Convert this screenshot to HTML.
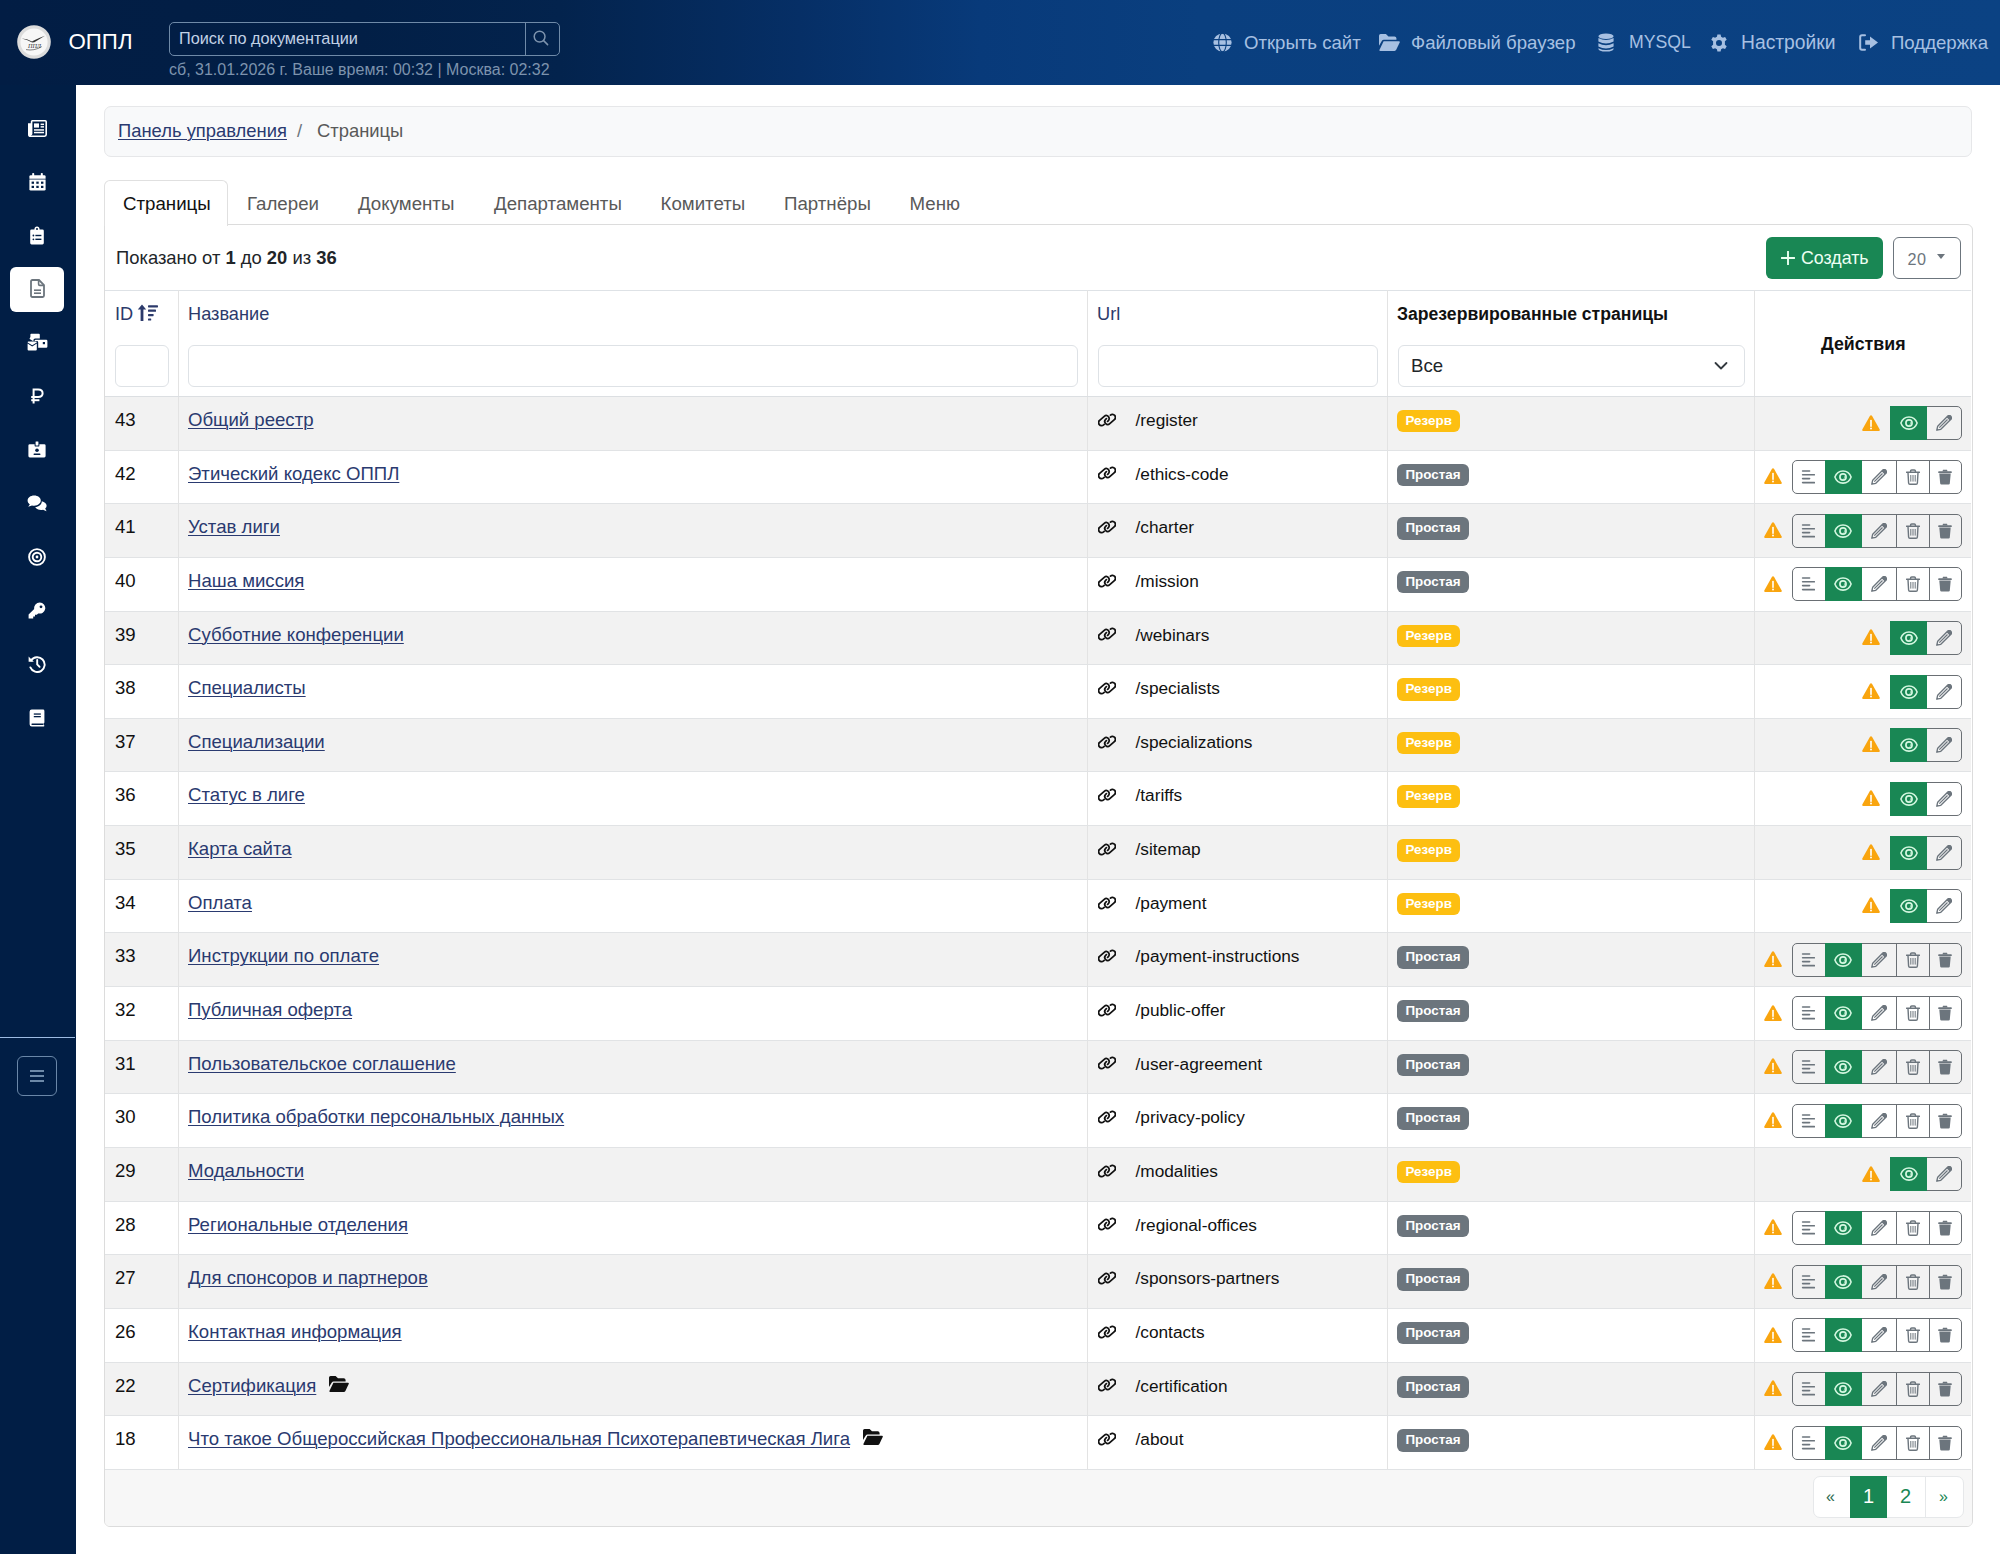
<!DOCTYPE html>
<html lang="ru"><head><meta charset="utf-8"><title>Страницы</title>
<style>
*{box-sizing:border-box;margin:0;padding:0}
html,body{width:2000px;height:1554px;overflow:hidden;background:#fff;font-family:"Liberation Sans",sans-serif;color:#212529}
.abs{position:absolute}
#hdr{position:absolute;left:0;top:0;width:2000px;height:85px;background:linear-gradient(90deg,#021d44 0%,#021f46 18%,#03234d 28%,#062f66 40%,#083a7a 49%,#0a3f7f 60%,#0b4283 100%)}
#side{position:absolute;left:0;top:85px;width:76px;height:1469px;background:#011e45}
.sico{position:absolute;left:0;width:74px;height:20px;display:flex;align-items:center;justify-content:center}
.sact{position:absolute;left:10px;width:54px;height:45px;background:#fff;border-radius:6px}
.navi{position:absolute;top:0;height:85px;display:flex;align-items:center;color:#a7c0e2;font-size:18.6px;white-space:nowrap}
.navi svg{display:block}
.tx{white-space:nowrap}
#bc{position:absolute;left:104px;top:105.5px;width:1868px;height:51px;background:#f8f9fa;border:1px solid #e6e7e9;border-radius:7px}
.tab{position:absolute;top:181px;height:45px;font-size:18.7px;color:#595959;white-space:nowrap;line-height:45px}
#card{position:absolute;left:104px;top:224px;width:1868.5px;height:1303px;border:1px solid #dcdcdc;border-radius:0 6px 6px 6px;background:#fff;overflow:hidden}
.tr{position:absolute;left:105px;width:1866px;height:53.67px;border-bottom:1px solid #e1e3e5;background:#fff}
.tr.st{background:#f2f2f2}
.tr>div{position:absolute;top:0;height:100%;border-right:1px solid #e3e3e3}
.c1{left:0;width:74px}
.c2{left:74px;width:909px}
.c3{left:983px;width:300px}
.c4{left:1283px;width:367px}
.c5{left:1650px;width:216px;border-right:none!important}
.c1 .tx,.c2 .tx{position:absolute;left:10px;top:12px;font-size:18.6px;line-height:22px;color:#111}
.c2 .tx{left:9px}
.lnk{color:#2a3a70;text-decoration:underline;text-underline-offset:2px;text-decoration-thickness:1.2px}
.fold{display:inline-block;margin-left:13px;vertical-align:0px}
.fold svg{display:block}
.ilink{position:absolute;left:9.8px;top:15.8px}
.url{position:absolute;left:47.5px;top:12px;font-size:17.25px;line-height:22px;color:#111}
.badge{position:absolute;left:9px;top:13px;height:22.4px;line-height:22.4px;padding:0 8.5px;border-radius:6px;color:#fff;font-weight:700;font-size:13.4px}
.rz{background:#fdbf11}
.pr{background:#6c757d}
.c5in{position:absolute;right:9.4px;top:9.4px;height:34px;display:flex;align-items:center}
.iwarn{display:block;margin-right:10.4px;margin-top:-1.5px}
.agrp{position:relative;height:34px;display:block}
.agbg{position:absolute;left:0;top:0;height:34px;border:1.2px solid #6a6f74;border-radius:5px}
.ab{position:absolute;top:0;height:34px;display:flex;align-items:center;justify-content:center}
.ab.g{background:#198754}
.ic{display:block;line-height:0}
.asep{position:absolute;top:0;width:1.2px;height:34px;background:#6a6f74}
.inp{position:absolute;top:345px;height:41.5px;border:1px solid #dee2e6;border-radius:6px;background:#fff}
.th{position:absolute;font-size:18.2px;line-height:22px;color:#2c3a6b;white-space:nowrap}
</style></head><body>
<div id="hdr">
  <div class="abs" style="left:16.5px;top:25px"><svg width="34" height="34" viewBox="0 0 34 34"><circle cx="17" cy="17" r="16.8" fill="#dcdcdc"/><circle cx="17" cy="17" r="13.6" fill="#f7f7f7"/><path d="M4.6 13.6 Q10 13.6 15 16.4 L16.8 15.4 Q22.6 12.8 28 10.8 Q22.4 14.2 17.4 17.2 L15.2 17.6 Q10 14.6 4.6 13.6Z" fill="#333"/><text x="17.5" y="23" font-family="Liberation Serif" font-style="italic" font-size="6.2" text-anchor="middle" fill="#333">ППЛ</text><path d="M9 24.6 Q17 26.2 24.8 21.6" fill="none" stroke="#333" stroke-width=".6"/></svg></div>
  <div class="abs tx" style="left:68.5px;top:29px;font-size:22.3px;line-height:26px;color:#fff">ОППЛ</div>
  <div class="abs" style="left:169px;top:22px;width:391px;height:34px;border:1.5px solid #6f8aa8;border-radius:5px"></div>
  <div class="abs" style="left:524.5px;top:22px;width:1.5px;height:34px;background:#6f8aa8"></div>
  <div class="abs tx" style="left:179px;top:28px;font-size:16.3px;line-height:20px;color:#c2d2e6">Поиск по документации</div>
  <div class="abs" style="left:533px;top:29.5px"><svg width="16" height="16" viewBox="0 0 16 16"><g fill="none" stroke="#7d93ad" stroke-width="1.5" stroke-linecap="round"><circle cx="6.6" cy="6.6" r="5.4"/><path d="M10.6 10.6 L14.6 14.6"/></g></svg></div>
  <div class="abs tx" style="left:169px;top:60px;font-size:16px;line-height:20px;color:#7d93ad">сб, 31.01.2026 г. Ваше время: 00:32 | Москва: 02:32</div>
  <div class="navi" style="left:1213px"><svg width="19" height="19" viewBox="0 0 19 19"><circle cx="9.5" cy="9.5" r="9.1" fill="#a7c0e2"/><g fill="none" stroke="#0a3f7f" stroke-width="1.1"><ellipse cx="9.5" cy="9.5" rx="3.8" ry="9.4"/><path d="M0 6.6 H19 M0 12.4 H19"/></g></svg><span style="margin-left:12px">Открыть сайт</span></div>
  <div class="navi" style="left:1379px"><svg width="21" height="17" viewBox="0 0 20 16"><path d="M0 1.6 Q0 0 1.6 0 H6.6 L9 2.2 H14.8 Q16.4 2.2 16.6 4 V5.4 H4.6 Q3.4 5.4 2.8 6.4 L0 11Z" fill="#a7c0e2"/><path d="M4.4 6.8 H19 Q20.2 6.9 19.7 8 L16.4 15 Q15.9 16 14.8 16 H1.2 Q0 15.9 0.5 14.8Z" fill="#a7c0e2"/></svg><span style="margin-left:11px">Файловый браузер</span></div>
  <div class="navi" style="left:1598px"><svg width="16" height="19" viewBox="0 0 16 19"><g fill="#a7c0e2"><ellipse cx="8" cy="3.2" rx="7.6" ry="2.8"/><path d="M0.4 5 Q8 9 15.6 5 V8.4 Q8 12.4 0.4 8.4Z"/><path d="M0.4 10.2 Q8 14.2 15.6 10.2 V13.6 Q8 17.6 0.4 13.6Z"/><path d="M0.4 15.2 Q8 19 15.6 15.2 V15.8 Q15.6 18.6 8 18.6 Q0.4 18.6 0.4 15.8Z"/></g></svg><span style="margin-left:15px;font-size:17.7px">MYSQL</span></div>
  <div class="navi" style="left:1710px"><svg width="18" height="18" viewBox="0 0 18 18"><path fill="#a7c0e2" fill-rule="evenodd" d="M7.4 0.4 H10.6 L11.1 2.7 L12.9 3.7 L15.1 2.9 L16.7 5.7 L14.9 7.3 V9.1 V10.7 L16.7 12.3 L15.1 15.1 L12.9 14.3 L11.1 15.3 L10.6 17.6 H7.4 L6.9 15.3 L5.1 14.3 L2.9 15.1 L1.3 12.3 L3.1 10.7 V7.3 L1.3 5.7 L2.9 2.9 L5.1 3.7 L6.9 2.7Z M9 6 A3 3 0 1 0 9 12 A3 3 0 1 0 9 6Z"/></svg><span style="margin-left:13px;font-size:19.3px">Настройки</span></div>
  <div class="navi" style="left:1859px"><svg width="20" height="17" viewBox="0 0 20 17"><path d="M6 1.2 H3 Q1.2 1.2 1.2 3 V14 Q1.2 15.8 3 15.8 H6" fill="none" stroke="#a7c0e2" stroke-width="2" stroke-linecap="round"/><path d="M6.2 6.2 H11 V2.6 L19 8.5 L11 14.4 V10.8 H6.2Z" fill="#a7c0e2"/></svg><span style="margin-left:12px">Поддержка</span></div>
</div>
<div id="side">
  <div style="position:absolute;left:0;top:-85px"><div class="sico" style="top:118.0px"><svg width="19" height="17" viewBox="0 0 19 17"><path d="M3.6 1.5 Q3.6 0.8 4.3 0.8 H17.2 Q18.2 0.8 18.2 1.8 V14.6 Q18.2 16.2 16.6 16.2 H2.6 Q0.8 16.2 0.8 14.4 V4 H2.4 V14.2 Q2.4 14.8 3 14.6 Q3.6 14.4 3.6 13.8Z" fill="none" stroke="#fff" stroke-width="1.6"/><rect x="6" y="3.4" width="5" height="4.2" fill="#fff"/><rect x="12.6" y="3.6" width="3.4" height="1.5" fill="#fff"/><rect x="12.6" y="6.1" width="3.4" height="1.5" fill="#fff"/><rect x="6" y="9.2" width="10" height="1.5" fill="#fff"/><rect x="6" y="11.8" width="10" height="1.5" fill="#fff"/></svg></div><div class="sico" style="top:171.6px"><svg width="17" height="18" viewBox="0 0 17 18"><rect x="3.2" y="0" width="2" height="3.6" rx=".8" fill="#fff"/><rect x="11.8" y="0" width="2" height="3.6" rx=".8" fill="#fff"/><path d="M0.4 3.6 Q0.4 2.2 1.8 2.2 H15.2 Q16.6 2.2 16.6 3.6 V5.8 H0.4Z" fill="#fff"/><path d="M0.4 6.6 H16.6 V16.2 Q16.6 17.6 15.2 17.6 H1.8 Q0.4 17.6 0.4 16.2Z" fill="#fff"/><g fill="#021e45"><rect x="2.6" y="8.6" width="2.4" height="2.2"/><rect x="7.3" y="8.6" width="2.4" height="2.2"/><rect x="12" y="8.6" width="2.4" height="2.2"/><rect x="2.6" y="12.8" width="2.4" height="2.2"/><rect x="7.3" y="12.8" width="2.4" height="2.2"/><rect x="12" y="12.8" width="2.4" height="2.2"/></g></svg></div><div class="sico" style="top:225.2px"><svg width="14" height="19" viewBox="0 0 14 19"><path d="M1.6 3.4 H4.4 Q4.6 0.6 7 0.6 Q9.4 0.6 9.6 3.4 H12.4 Q13.8 3.4 13.8 4.8 V17 Q13.8 18.4 12.4 18.4 H1.6 Q0.2 18.4 0.2 17 V4.8 Q0.2 3.4 1.6 3.4Z" fill="#fff"/><circle cx="7" cy="3" r="1" fill="#021e45"/><g fill="#021e45"><circle cx="3.4" cy="9.5" r=".9"/><circle cx="3.4" cy="13.3" r=".9"/><rect x="5.4" y="8.8" width="6" height="1.4"/><rect x="5.4" y="12.6" width="6" height="1.4"/></g></svg></div><div class="sact" style="top:267px"></div><div class="sico" style="top:278.8px"><svg width="15" height="19" viewBox="0 0 15 19"><path d="M1 2.4 Q1 1 2.4 1 H9 L14 6 V16.6 Q14 18 12.6 18 H2.4 Q1 18 1 16.6Z" fill="none" stroke="#6c757d" stroke-width="1.8"/><path d="M8.6 1.2 V5.2 Q8.6 6.4 9.8 6.4 H13.8" fill="none" stroke="#6c757d" stroke-width="1.6"/><rect x="4" y="10.4" width="7" height="1.6" fill="#6c757d"/><rect x="4" y="13.4" width="7" height="1.6" fill="#6c757d"/></svg></div><div class="sico" style="top:332.4px"><svg width="21" height="18" viewBox="0 0 21 18"><path d="M3.4 4 V1.6 Q3.4 0.8 4.2 0.8 H11.8 Q12.8 0.8 12.8 1.8 V5.4 H8.2 Q6.4 5.4 6.4 7.2 V8.2 L2.6 6 V5.4" fill="#fff"/><path d="M7.6 8 Q7.6 6.8 8.8 6.8 H19.2 Q20.4 6.8 20.4 8 V13.6 Q20.4 14.8 19.2 14.8 H11.2 V9.4 Q11.2 8 9.8 8Z" fill="#fff"/><rect x="15.8" y="9" width="2.2" height="2.2" fill="#021e45"/><path d="M0.6 10.4 L5.2 13.4 L9.8 10.4 V16.4 Q9.8 17.4 8.8 17.4 H1.6 Q0.6 17.4 0.6 16.4Z" fill="#fff"/><path d="M0.6 9.4 Q0.6 8.6 1.4 8.6 H9 Q9.8 8.6 9.8 9.4 L5.2 12.2Z" fill="#fff"/></svg></div><div class="sico" style="top:386.0px"><svg width="14" height="16" viewBox="0 0 14 16"><g fill="none" stroke="#fff" stroke-width="2"><path d="M3.6 15.6 V1.6 H8.2 Q12.6 1.6 12.6 5.3 Q12.6 9 8.2 9 H1.2"/><path d="M1.2 12.2 H9.4"/></g></svg></div><div class="sico" style="top:439.6px"><svg width="18" height="17" viewBox="0 0 18 17"><path d="M1.8 3.2 H6.6 V4.4 Q6.6 5.6 7.8 5.6 H10.2 Q11.4 5.6 11.4 4.4 V3.2 H16.2 Q17.6 3.2 17.6 4.6 V15 Q17.6 16.4 16.2 16.4 H1.8 Q0.4 16.4 0.4 15 V4.6 Q0.4 3.2 1.8 3.2Z" fill="#fff"/><rect x="7.6" y="0.4" width="2.8" height="4.2" rx=".4" fill="#fff"/><circle cx="9" cy="9.2" r="1.8" fill="#021e45"/><rect x="5.6" y="12.4" width="6.8" height="1.6" rx=".6" fill="#021e45"/></svg></div><div class="sico" style="top:493.2px"><svg width="20" height="17" viewBox="0 0 20 17"><path d="M7.2 0.6 C3.4 0.6 0.6 2.8 0.6 5.6 C0.6 7.2 1.5 8.5 2.8 9.4 L1.2 11.8 L5 10.4 C5.7 10.6 6.4 10.7 7.2 10.7 C11 10.7 13.8 8.4 13.8 5.6 C13.8 2.8 11 0.6 7.2 0.6Z" fill="#fff"/><path d="M14.8 6.2 C14.8 9.6 11.8 11.8 8.2 12 C9.2 13.8 11.4 15 14 15 C14.7 15 15.4 14.9 16 14.7 L19.6 16.2 L18.2 13.6 C19.2 12.8 19.6 11.8 19.6 10.6 C19.6 8.6 17.6 6.8 14.8 6.2Z" fill="#fff"/></svg></div><div class="sico" style="top:546.8px"><svg width="18" height="18" viewBox="0 0 18 18"><g fill="none" stroke="#fff" stroke-width="1.9"><circle cx="9" cy="9" r="7.9"/><circle cx="9" cy="9" r="4.3"/></g><circle cx="9" cy="9" r="1.4" fill="#fff"/></svg></div><div class="sico" style="top:600.4px"><svg width="18" height="17" viewBox="0 0 18 17"><path d="M11.8 0.4 A5.6 5.6 0 1 1 10.2 11.4 L8.8 12.8 H7 V14.6 H5.2 V16.4 H0.6 V12.6 L6.2 7 A5.6 5.6 0 0 1 11.8 0.4Z" fill="#fff"/><circle cx="13" cy="4.8" r="1.4" fill="#021e45"/></svg></div><div class="sico" style="top:654.0px"><svg width="18" height="18" viewBox="0 0 18 18"><g fill="none" stroke="#fff" stroke-width="1.9" stroke-linecap="round"><path d="M3.2 5.4 A7.4 7.4 0 1 1 2.4 12.4"/><path d="M9.2 5 V9.4 L11.6 11.8"/></g><path d="M0.6 1.6 V6.8 H5.8Z" fill="#fff"/></svg></div><div class="sico" style="top:707.6px"><svg width="16" height="18" viewBox="0 0 16 18"><path d="M2.8 0.6 H14 Q15.4 0.6 15.4 2 V13.2 Q15.4 14 14.6 14.2 V16 Q15.4 16.2 15.4 16.8 Q15.4 17.4 14.6 17.4 H2.8 Q0.6 17.4 0.6 15.2 V2.8 Q0.6 0.6 2.8 0.6Z" fill="#fff"/><rect x="2.4" y="14.6" width="12" height="1.4" rx=".7" fill="#021e45"/><rect x="4.8" y="4.4" width="7" height="1.3" fill="#021e45"/><rect x="4.8" y="7" width="7" height="1.3" fill="#021e45"/></svg></div></div>
  <div class="abs" style="left:0;top:951.6px;width:75px;height:1.6px;background:#9dbbe2"></div>
  <div class="abs" style="left:17px;top:971px;width:40px;height:40px;border:1.2px solid #6a87a8;border-radius:6px"></div>
  <div class="abs" style="left:30px;top:985px;width:14px;height:1.6px;background:#6d89a8"></div>
  <div class="abs" style="left:30px;top:990px;width:14px;height:1.6px;background:#6d89a8"></div>
  <div class="abs" style="left:30px;top:995px;width:14px;height:1.6px;background:#6d89a8"></div>
</div>

<div id="bc"></div>
<div class="abs tx" style="left:118px;top:120px;font-size:18.4px;line-height:22px;color:#2a3a70;text-decoration:underline;text-underline-offset:2px;text-decoration-thickness:1.2px">Панель управления</div>
<div class="abs tx" style="left:297px;top:120px;font-size:18.4px;line-height:22px;color:#6c757d">/</div>
<div class="abs tx" style="left:317px;top:120px;font-size:18.4px;line-height:22px;color:#595959">Страницы</div>

<div id="card">
  <div class="abs" style="left:0;top:1245px;width:1867px;height:58px;background:#f7f7f7"></div>
</div>
<div class="abs" style="left:104px;top:180px;width:124px;height:46px;background:#fff;border:1px solid #e0e0e0;border-bottom:none;border-radius:6px 6px 0 0"></div>
<div class="tab" style="left:123px;color:#111">Страницы</div>
<div class="tab" style="left:247px">Галереи</div>
<div class="tab" style="left:358px">Документы</div>
<div class="tab" style="left:494px">Департаменты</div>
<div class="tab" style="left:660.5px">Комитеты</div>
<div class="tab" style="left:784px">Партнёры</div>
<div class="tab" style="left:909.5px">Меню</div>

<div class="abs tx" style="left:116px;top:247px;font-size:18.4px;line-height:22px;color:#212529">Показано от <b style="font-weight:700">1</b> до <b>20</b> из <b>36</b></div>
<div class="abs" style="left:1766px;top:237px;width:117px;height:42px;background:#198754;border-radius:6px"></div>
<div class="abs" style="left:1781px;top:250.5px"><svg width="14" height="14" viewBox="0 0 14 14"><path d="M7 0.5 V13.5 M0.5 7 H13.5" stroke="#e9fff0" stroke-width="1.9" stroke-linecap="round"/></svg></div>
<div class="abs tx" style="left:1801px;top:247px;font-size:17.8px;line-height:22px;color:#eefff3">Создать</div>
<div class="abs" style="left:1892.5px;top:237px;width:68px;height:42px;border:1px solid #6c757d;border-radius:6px"></div>
<div class="abs tx" style="left:1907.5px;top:249px;font-size:16.2px;line-height:20px;color:#6c757d;letter-spacing:.6px">20</div>
<div class="abs" style="left:1937px;top:254px;width:0;height:0;border-left:4.5px solid transparent;border-right:4.5px solid transparent;border-top:5px solid #6c757d"></div>

<!-- table head -->
<div class="abs" style="left:105px;top:290px;width:1866px;height:1px;background:#dee2e6"></div>
<div class="abs" style="left:178px;top:290px;width:1px;height:107px;background:#e3e3e3"></div>
<div class="abs" style="left:1087px;top:290px;width:1px;height:107px;background:#e3e3e3"></div>
<div class="abs" style="left:1387px;top:290px;width:1px;height:107px;background:#e3e3e3"></div>
<div class="abs" style="left:1754px;top:290px;width:1px;height:107px;background:#e3e3e3"></div>
<div class="abs" style="left:105px;top:396px;width:1866px;height:1px;background:#dcdfe2"></div>
<div class="th" style="left:115px;top:303px">ID</div>
<div class="abs" style="left:137px;top:304px"><svg width="22" height="18" viewBox="0 0 22 18"><g fill="#2c3a6b"><path d="M5 0.6 L9.2 5.4 H6.4 V17 H3.6 V5.4 H0.8Z"/><rect x="11" y="1.2" width="10" height="2.2" rx=".6"/><rect x="11" y="5.6" width="8" height="2.2" rx=".6"/><rect x="11" y="10" width="5.6" height="2.2" rx=".6"/><rect x="11" y="14.4" width="3.2" height="2.2" rx=".6"/></g></svg></div>
<div class="th" style="left:188px;top:303px">Название</div>
<div class="th" style="left:1097px;top:303px">Url</div>
<div class="th" style="left:1397px;top:303px;font-weight:700;color:#111;font-size:17.6px">Зарезервированные страницы</div>
<div class="th" style="left:1821px;top:333px;font-weight:700;color:#111;font-size:17.8px">Действия</div>
<div class="inp" style="left:115px;width:53.5px"></div>
<div class="inp" style="left:188px;width:890px"></div>
<div class="inp" style="left:1097.5px;width:280.5px"></div>
<div class="inp" style="left:1397.5px;width:347px"></div>
<div class="abs tx" style="left:1411px;top:355px;font-size:18.6px;line-height:22px;color:#212529">Все</div>
<div class="abs" style="left:1714px;top:357px"><svg width="14" height="10" viewBox="0 0 14 10"><path d="M1.5 2 L7 7.5 L12.5 2" fill="none" stroke="#343a40" stroke-width="1.8" stroke-linecap="round" stroke-linejoin="round"/></svg></div>

<div class="tr st" style="top:397.00px">
<div class="c1"><span class="tx">43</span></div>
<div class="c2"><span class="tx"><a class="lnk">Общий реестр</a></span></div>
<div class="c3"><svg class="ilink" width="18" height="14" viewBox="0 0 18 14"><g fill="none" stroke="#111" stroke-width="1.75" stroke-linecap="round"><path d="M6.17 11.35 L5.57 11.87 A3 3 0 0 1 1.63 7.33 L6.23 3.33 A3 3 0 0 1 10.17 7.87 L9.6 8.4"/><path d="M12.43 2.13 A3 3 0 0 1 16.37 6.67 L11.77 10.67 A3 3 0 0 1 7.83 6.13 L8.43 5.6"/></g></svg><span class="tx url">/register</span></div>
<div class="c4"><span class="badge rz">Резерв</span></div>
<div class="c5"><span class="c5in"><svg class="iwarn" width="18" height="16" viewBox="0 0 18 16"><path d="M9 0.3 Q9.7 0.3 10.1 1 L17.7 14.4 Q18.1 15.8 16.8 15.9 L1.2 15.9 Q-0.1 15.8 0.3 14.4 L7.9 1 Q8.3 0.3 9 0.3Z" fill="#f9a50f"/><rect x="8.2" y="4.8" width="1.6" height="7.2" rx=".7" fill="#fff"/><circle cx="9" cy="13.5" r="0.95" fill="#fff"/></svg><span class="agrp" style="width:71.6px"><span class="agbg" style="width:71.6px"></span><span class="ab g" style="left:0px;width:37.0px"><span class="ic"><svg width="18" height="14" viewBox="0 0 18 14"><path d="M9 0.9 C5 0.9 2 3.7 0.9 7 C2 10.3 5 13.1 9 13.1 C13 13.1 16 10.3 17.1 7 C16 3.7 13 0.9 9 0.9Z" fill="none" stroke="#d4f7e0" stroke-width="1.55"/><circle cx="9" cy="7" r="3.1" fill="none" stroke="#d4f7e0" stroke-width="1.65"/><path d="M9.9 8.6 A1.8 1.8 0 0 0 10.6 6.4" fill="none" stroke="#d4f7e0" stroke-width="0.9"/></svg></span></span><span class="ab w ll" style="left:37.0px;width:34.599999999999994px"><span class="ic"><svg width="16" height="16" viewBox="0 0 16 16"><path d="M0.8 15.2 L1.7 11.2 L11.8 1.1 Q13.2 -0.3 14.6 1.1 L14.9 1.4 Q16.3 2.8 14.9 4.2 L4.8 14.3 Z" fill="none" stroke="#6c757d" stroke-width="1.35" stroke-linejoin="round"/><path d="M10.6 2.3 L11.8 1.1 Q13.2 -0.3 14.6 1.1 L14.9 1.4 Q16.3 2.8 14.9 4.2 L13.7 5.4Z" fill="#6c757d"/><path d="M3.3 12.7 L11.5 4.5" stroke="#6c757d" stroke-width="1.2"/><path d="M0.8 15.2 L1.2 13.4 L2.6 14.8Z" fill="#6c757d"/></svg></span></span></span></span></div>
</div>
<div class="tr" style="top:450.64px">
<div class="c1"><span class="tx">42</span></div>
<div class="c2"><span class="tx"><a class="lnk">Этический кодекс ОППЛ</a></span></div>
<div class="c3"><svg class="ilink" width="18" height="14" viewBox="0 0 18 14"><g fill="none" stroke="#111" stroke-width="1.75" stroke-linecap="round"><path d="M6.17 11.35 L5.57 11.87 A3 3 0 0 1 1.63 7.33 L6.23 3.33 A3 3 0 0 1 10.17 7.87 L9.6 8.4"/><path d="M12.43 2.13 A3 3 0 0 1 16.37 6.67 L11.77 10.67 A3 3 0 0 1 7.83 6.13 L8.43 5.6"/></g></svg><span class="tx url">/ethics-code</span></div>
<div class="c4"><span class="badge pr">Простая</span></div>
<div class="c5"><span class="c5in"><svg class="iwarn" width="18" height="16" viewBox="0 0 18 16"><path d="M9 0.3 Q9.7 0.3 10.1 1 L17.7 14.4 Q18.1 15.8 16.8 15.9 L1.2 15.9 Q-0.1 15.8 0.3 14.4 L7.9 1 Q8.3 0.3 9 0.3Z" fill="#f9a50f"/><rect x="8.2" y="4.8" width="1.6" height="7.2" rx=".7" fill="#fff"/><circle cx="9" cy="13.5" r="0.95" fill="#fff"/></svg><span class="agrp" style="width:169.6px"><span class="agbg" style="width:169.6px"></span><span class="ab w fl" style="left:0px;width:32.7px"><span class="ic"><svg width="14" height="14" viewBox="0 0 14 14"><g stroke="#6c757d" stroke-width="1.55" stroke-linecap="round"><path d="M1.6 0.9 H8.6"/><path d="M1.6 4.8 H13.4"/><path d="M1.6 8.6 H8.6"/><path d="M1.6 12.6 H13.4"/></g></svg></span></span><span class="ab g" style="left:32.7px;width:37.099999999999994px"><span class="ic"><svg width="18" height="14" viewBox="0 0 18 14"><path d="M9 0.9 C5 0.9 2 3.7 0.9 7 C2 10.3 5 13.1 9 13.1 C13 13.1 16 10.3 17.1 7 C16 3.7 13 0.9 9 0.9Z" fill="none" stroke="#d4f7e0" stroke-width="1.55"/><circle cx="9" cy="7" r="3.1" fill="none" stroke="#d4f7e0" stroke-width="1.65"/><path d="M9.9 8.6 A1.8 1.8 0 0 0 10.6 6.4" fill="none" stroke="#d4f7e0" stroke-width="0.9"/></svg></span></span><span class="ab w" style="left:69.8px;width:34.60000000000001px"><span class="ic"><svg width="16" height="16" viewBox="0 0 16 16"><path d="M0.8 15.2 L1.7 11.2 L11.8 1.1 Q13.2 -0.3 14.6 1.1 L14.9 1.4 Q16.3 2.8 14.9 4.2 L4.8 14.3 Z" fill="none" stroke="#6c757d" stroke-width="1.35" stroke-linejoin="round"/><path d="M10.6 2.3 L11.8 1.1 Q13.2 -0.3 14.6 1.1 L14.9 1.4 Q16.3 2.8 14.9 4.2 L13.7 5.4Z" fill="#6c757d"/><path d="M3.3 12.7 L11.5 4.5" stroke="#6c757d" stroke-width="1.2"/><path d="M0.8 15.2 L1.2 13.4 L2.6 14.8Z" fill="#6c757d"/></svg></span></span><span class="ab w" style="left:104.4px;width:32.599999999999994px"><span class="ic"><svg width="14" height="16" viewBox="0 0 14 16"><g fill="none" stroke="#6c757d"><path d="M0.6 3.2 H13.4" stroke-width="1.5" stroke-linecap="round"/><path d="M4.6 3 V2.1 Q4.6 1 5.7 1 H8.3 Q9.4 1 9.4 2.1 V3" stroke-width="1.4"/><path d="M2 3.6 L2.6 14 Q2.7 15.2 3.9 15.2 H10.1 Q11.3 15.2 11.4 14 L12 3.6" stroke-width="1.4"/><path d="M4.8 6 V12.6 M7 6 V12.6 M9.2 6 V12.6" stroke-width="1"/></g></svg></span></span><span class="ab w ll" style="left:137.0px;width:32.599999999999994px"><span class="ic"><svg width="14" height="16" viewBox="0 0 14 16"><g fill="#6c757d"><rect x="0.2" y="2.2" width="13.6" height="1.9" rx=".7"/><path d="M4.4 2.4 L5 0.7 H9 L9.6 2.4Z"/><path d="M1.3 4.6 H12.7 L11.8 14.4 Q11.7 15.4 10.6 15.4 H3.4 Q2.3 15.4 2.2 14.4Z"/></g></svg></span></span><span class="asep" style="left:103.9px"></span><span class="asep" style="left:136.5px"></span></span></span></div>
</div>
<div class="tr st" style="top:504.28px">
<div class="c1"><span class="tx">41</span></div>
<div class="c2"><span class="tx"><a class="lnk">Устав лиги</a></span></div>
<div class="c3"><svg class="ilink" width="18" height="14" viewBox="0 0 18 14"><g fill="none" stroke="#111" stroke-width="1.75" stroke-linecap="round"><path d="M6.17 11.35 L5.57 11.87 A3 3 0 0 1 1.63 7.33 L6.23 3.33 A3 3 0 0 1 10.17 7.87 L9.6 8.4"/><path d="M12.43 2.13 A3 3 0 0 1 16.37 6.67 L11.77 10.67 A3 3 0 0 1 7.83 6.13 L8.43 5.6"/></g></svg><span class="tx url">/charter</span></div>
<div class="c4"><span class="badge pr">Простая</span></div>
<div class="c5"><span class="c5in"><svg class="iwarn" width="18" height="16" viewBox="0 0 18 16"><path d="M9 0.3 Q9.7 0.3 10.1 1 L17.7 14.4 Q18.1 15.8 16.8 15.9 L1.2 15.9 Q-0.1 15.8 0.3 14.4 L7.9 1 Q8.3 0.3 9 0.3Z" fill="#f9a50f"/><rect x="8.2" y="4.8" width="1.6" height="7.2" rx=".7" fill="#fff"/><circle cx="9" cy="13.5" r="0.95" fill="#fff"/></svg><span class="agrp" style="width:169.6px"><span class="agbg" style="width:169.6px"></span><span class="ab w fl" style="left:0px;width:32.7px"><span class="ic"><svg width="14" height="14" viewBox="0 0 14 14"><g stroke="#6c757d" stroke-width="1.55" stroke-linecap="round"><path d="M1.6 0.9 H8.6"/><path d="M1.6 4.8 H13.4"/><path d="M1.6 8.6 H8.6"/><path d="M1.6 12.6 H13.4"/></g></svg></span></span><span class="ab g" style="left:32.7px;width:37.099999999999994px"><span class="ic"><svg width="18" height="14" viewBox="0 0 18 14"><path d="M9 0.9 C5 0.9 2 3.7 0.9 7 C2 10.3 5 13.1 9 13.1 C13 13.1 16 10.3 17.1 7 C16 3.7 13 0.9 9 0.9Z" fill="none" stroke="#d4f7e0" stroke-width="1.55"/><circle cx="9" cy="7" r="3.1" fill="none" stroke="#d4f7e0" stroke-width="1.65"/><path d="M9.9 8.6 A1.8 1.8 0 0 0 10.6 6.4" fill="none" stroke="#d4f7e0" stroke-width="0.9"/></svg></span></span><span class="ab w" style="left:69.8px;width:34.60000000000001px"><span class="ic"><svg width="16" height="16" viewBox="0 0 16 16"><path d="M0.8 15.2 L1.7 11.2 L11.8 1.1 Q13.2 -0.3 14.6 1.1 L14.9 1.4 Q16.3 2.8 14.9 4.2 L4.8 14.3 Z" fill="none" stroke="#6c757d" stroke-width="1.35" stroke-linejoin="round"/><path d="M10.6 2.3 L11.8 1.1 Q13.2 -0.3 14.6 1.1 L14.9 1.4 Q16.3 2.8 14.9 4.2 L13.7 5.4Z" fill="#6c757d"/><path d="M3.3 12.7 L11.5 4.5" stroke="#6c757d" stroke-width="1.2"/><path d="M0.8 15.2 L1.2 13.4 L2.6 14.8Z" fill="#6c757d"/></svg></span></span><span class="ab w" style="left:104.4px;width:32.599999999999994px"><span class="ic"><svg width="14" height="16" viewBox="0 0 14 16"><g fill="none" stroke="#6c757d"><path d="M0.6 3.2 H13.4" stroke-width="1.5" stroke-linecap="round"/><path d="M4.6 3 V2.1 Q4.6 1 5.7 1 H8.3 Q9.4 1 9.4 2.1 V3" stroke-width="1.4"/><path d="M2 3.6 L2.6 14 Q2.7 15.2 3.9 15.2 H10.1 Q11.3 15.2 11.4 14 L12 3.6" stroke-width="1.4"/><path d="M4.8 6 V12.6 M7 6 V12.6 M9.2 6 V12.6" stroke-width="1"/></g></svg></span></span><span class="ab w ll" style="left:137.0px;width:32.599999999999994px"><span class="ic"><svg width="14" height="16" viewBox="0 0 14 16"><g fill="#6c757d"><rect x="0.2" y="2.2" width="13.6" height="1.9" rx=".7"/><path d="M4.4 2.4 L5 0.7 H9 L9.6 2.4Z"/><path d="M1.3 4.6 H12.7 L11.8 14.4 Q11.7 15.4 10.6 15.4 H3.4 Q2.3 15.4 2.2 14.4Z"/></g></svg></span></span><span class="asep" style="left:103.9px"></span><span class="asep" style="left:136.5px"></span></span></span></div>
</div>
<div class="tr" style="top:557.92px">
<div class="c1"><span class="tx">40</span></div>
<div class="c2"><span class="tx"><a class="lnk">Наша миссия</a></span></div>
<div class="c3"><svg class="ilink" width="18" height="14" viewBox="0 0 18 14"><g fill="none" stroke="#111" stroke-width="1.75" stroke-linecap="round"><path d="M6.17 11.35 L5.57 11.87 A3 3 0 0 1 1.63 7.33 L6.23 3.33 A3 3 0 0 1 10.17 7.87 L9.6 8.4"/><path d="M12.43 2.13 A3 3 0 0 1 16.37 6.67 L11.77 10.67 A3 3 0 0 1 7.83 6.13 L8.43 5.6"/></g></svg><span class="tx url">/mission</span></div>
<div class="c4"><span class="badge pr">Простая</span></div>
<div class="c5"><span class="c5in"><svg class="iwarn" width="18" height="16" viewBox="0 0 18 16"><path d="M9 0.3 Q9.7 0.3 10.1 1 L17.7 14.4 Q18.1 15.8 16.8 15.9 L1.2 15.9 Q-0.1 15.8 0.3 14.4 L7.9 1 Q8.3 0.3 9 0.3Z" fill="#f9a50f"/><rect x="8.2" y="4.8" width="1.6" height="7.2" rx=".7" fill="#fff"/><circle cx="9" cy="13.5" r="0.95" fill="#fff"/></svg><span class="agrp" style="width:169.6px"><span class="agbg" style="width:169.6px"></span><span class="ab w fl" style="left:0px;width:32.7px"><span class="ic"><svg width="14" height="14" viewBox="0 0 14 14"><g stroke="#6c757d" stroke-width="1.55" stroke-linecap="round"><path d="M1.6 0.9 H8.6"/><path d="M1.6 4.8 H13.4"/><path d="M1.6 8.6 H8.6"/><path d="M1.6 12.6 H13.4"/></g></svg></span></span><span class="ab g" style="left:32.7px;width:37.099999999999994px"><span class="ic"><svg width="18" height="14" viewBox="0 0 18 14"><path d="M9 0.9 C5 0.9 2 3.7 0.9 7 C2 10.3 5 13.1 9 13.1 C13 13.1 16 10.3 17.1 7 C16 3.7 13 0.9 9 0.9Z" fill="none" stroke="#d4f7e0" stroke-width="1.55"/><circle cx="9" cy="7" r="3.1" fill="none" stroke="#d4f7e0" stroke-width="1.65"/><path d="M9.9 8.6 A1.8 1.8 0 0 0 10.6 6.4" fill="none" stroke="#d4f7e0" stroke-width="0.9"/></svg></span></span><span class="ab w" style="left:69.8px;width:34.60000000000001px"><span class="ic"><svg width="16" height="16" viewBox="0 0 16 16"><path d="M0.8 15.2 L1.7 11.2 L11.8 1.1 Q13.2 -0.3 14.6 1.1 L14.9 1.4 Q16.3 2.8 14.9 4.2 L4.8 14.3 Z" fill="none" stroke="#6c757d" stroke-width="1.35" stroke-linejoin="round"/><path d="M10.6 2.3 L11.8 1.1 Q13.2 -0.3 14.6 1.1 L14.9 1.4 Q16.3 2.8 14.9 4.2 L13.7 5.4Z" fill="#6c757d"/><path d="M3.3 12.7 L11.5 4.5" stroke="#6c757d" stroke-width="1.2"/><path d="M0.8 15.2 L1.2 13.4 L2.6 14.8Z" fill="#6c757d"/></svg></span></span><span class="ab w" style="left:104.4px;width:32.599999999999994px"><span class="ic"><svg width="14" height="16" viewBox="0 0 14 16"><g fill="none" stroke="#6c757d"><path d="M0.6 3.2 H13.4" stroke-width="1.5" stroke-linecap="round"/><path d="M4.6 3 V2.1 Q4.6 1 5.7 1 H8.3 Q9.4 1 9.4 2.1 V3" stroke-width="1.4"/><path d="M2 3.6 L2.6 14 Q2.7 15.2 3.9 15.2 H10.1 Q11.3 15.2 11.4 14 L12 3.6" stroke-width="1.4"/><path d="M4.8 6 V12.6 M7 6 V12.6 M9.2 6 V12.6" stroke-width="1"/></g></svg></span></span><span class="ab w ll" style="left:137.0px;width:32.599999999999994px"><span class="ic"><svg width="14" height="16" viewBox="0 0 14 16"><g fill="#6c757d"><rect x="0.2" y="2.2" width="13.6" height="1.9" rx=".7"/><path d="M4.4 2.4 L5 0.7 H9 L9.6 2.4Z"/><path d="M1.3 4.6 H12.7 L11.8 14.4 Q11.7 15.4 10.6 15.4 H3.4 Q2.3 15.4 2.2 14.4Z"/></g></svg></span></span><span class="asep" style="left:103.9px"></span><span class="asep" style="left:136.5px"></span></span></span></div>
</div>
<div class="tr st" style="top:611.56px">
<div class="c1"><span class="tx">39</span></div>
<div class="c2"><span class="tx"><a class="lnk">Субботние конференции</a></span></div>
<div class="c3"><svg class="ilink" width="18" height="14" viewBox="0 0 18 14"><g fill="none" stroke="#111" stroke-width="1.75" stroke-linecap="round"><path d="M6.17 11.35 L5.57 11.87 A3 3 0 0 1 1.63 7.33 L6.23 3.33 A3 3 0 0 1 10.17 7.87 L9.6 8.4"/><path d="M12.43 2.13 A3 3 0 0 1 16.37 6.67 L11.77 10.67 A3 3 0 0 1 7.83 6.13 L8.43 5.6"/></g></svg><span class="tx url">/webinars</span></div>
<div class="c4"><span class="badge rz">Резерв</span></div>
<div class="c5"><span class="c5in"><svg class="iwarn" width="18" height="16" viewBox="0 0 18 16"><path d="M9 0.3 Q9.7 0.3 10.1 1 L17.7 14.4 Q18.1 15.8 16.8 15.9 L1.2 15.9 Q-0.1 15.8 0.3 14.4 L7.9 1 Q8.3 0.3 9 0.3Z" fill="#f9a50f"/><rect x="8.2" y="4.8" width="1.6" height="7.2" rx=".7" fill="#fff"/><circle cx="9" cy="13.5" r="0.95" fill="#fff"/></svg><span class="agrp" style="width:71.6px"><span class="agbg" style="width:71.6px"></span><span class="ab g" style="left:0px;width:37.0px"><span class="ic"><svg width="18" height="14" viewBox="0 0 18 14"><path d="M9 0.9 C5 0.9 2 3.7 0.9 7 C2 10.3 5 13.1 9 13.1 C13 13.1 16 10.3 17.1 7 C16 3.7 13 0.9 9 0.9Z" fill="none" stroke="#d4f7e0" stroke-width="1.55"/><circle cx="9" cy="7" r="3.1" fill="none" stroke="#d4f7e0" stroke-width="1.65"/><path d="M9.9 8.6 A1.8 1.8 0 0 0 10.6 6.4" fill="none" stroke="#d4f7e0" stroke-width="0.9"/></svg></span></span><span class="ab w ll" style="left:37.0px;width:34.599999999999994px"><span class="ic"><svg width="16" height="16" viewBox="0 0 16 16"><path d="M0.8 15.2 L1.7 11.2 L11.8 1.1 Q13.2 -0.3 14.6 1.1 L14.9 1.4 Q16.3 2.8 14.9 4.2 L4.8 14.3 Z" fill="none" stroke="#6c757d" stroke-width="1.35" stroke-linejoin="round"/><path d="M10.6 2.3 L11.8 1.1 Q13.2 -0.3 14.6 1.1 L14.9 1.4 Q16.3 2.8 14.9 4.2 L13.7 5.4Z" fill="#6c757d"/><path d="M3.3 12.7 L11.5 4.5" stroke="#6c757d" stroke-width="1.2"/><path d="M0.8 15.2 L1.2 13.4 L2.6 14.8Z" fill="#6c757d"/></svg></span></span></span></span></div>
</div>
<div class="tr" style="top:665.20px">
<div class="c1"><span class="tx">38</span></div>
<div class="c2"><span class="tx"><a class="lnk">Специалисты</a></span></div>
<div class="c3"><svg class="ilink" width="18" height="14" viewBox="0 0 18 14"><g fill="none" stroke="#111" stroke-width="1.75" stroke-linecap="round"><path d="M6.17 11.35 L5.57 11.87 A3 3 0 0 1 1.63 7.33 L6.23 3.33 A3 3 0 0 1 10.17 7.87 L9.6 8.4"/><path d="M12.43 2.13 A3 3 0 0 1 16.37 6.67 L11.77 10.67 A3 3 0 0 1 7.83 6.13 L8.43 5.6"/></g></svg><span class="tx url">/specialists</span></div>
<div class="c4"><span class="badge rz">Резерв</span></div>
<div class="c5"><span class="c5in"><svg class="iwarn" width="18" height="16" viewBox="0 0 18 16"><path d="M9 0.3 Q9.7 0.3 10.1 1 L17.7 14.4 Q18.1 15.8 16.8 15.9 L1.2 15.9 Q-0.1 15.8 0.3 14.4 L7.9 1 Q8.3 0.3 9 0.3Z" fill="#f9a50f"/><rect x="8.2" y="4.8" width="1.6" height="7.2" rx=".7" fill="#fff"/><circle cx="9" cy="13.5" r="0.95" fill="#fff"/></svg><span class="agrp" style="width:71.6px"><span class="agbg" style="width:71.6px"></span><span class="ab g" style="left:0px;width:37.0px"><span class="ic"><svg width="18" height="14" viewBox="0 0 18 14"><path d="M9 0.9 C5 0.9 2 3.7 0.9 7 C2 10.3 5 13.1 9 13.1 C13 13.1 16 10.3 17.1 7 C16 3.7 13 0.9 9 0.9Z" fill="none" stroke="#d4f7e0" stroke-width="1.55"/><circle cx="9" cy="7" r="3.1" fill="none" stroke="#d4f7e0" stroke-width="1.65"/><path d="M9.9 8.6 A1.8 1.8 0 0 0 10.6 6.4" fill="none" stroke="#d4f7e0" stroke-width="0.9"/></svg></span></span><span class="ab w ll" style="left:37.0px;width:34.599999999999994px"><span class="ic"><svg width="16" height="16" viewBox="0 0 16 16"><path d="M0.8 15.2 L1.7 11.2 L11.8 1.1 Q13.2 -0.3 14.6 1.1 L14.9 1.4 Q16.3 2.8 14.9 4.2 L4.8 14.3 Z" fill="none" stroke="#6c757d" stroke-width="1.35" stroke-linejoin="round"/><path d="M10.6 2.3 L11.8 1.1 Q13.2 -0.3 14.6 1.1 L14.9 1.4 Q16.3 2.8 14.9 4.2 L13.7 5.4Z" fill="#6c757d"/><path d="M3.3 12.7 L11.5 4.5" stroke="#6c757d" stroke-width="1.2"/><path d="M0.8 15.2 L1.2 13.4 L2.6 14.8Z" fill="#6c757d"/></svg></span></span></span></span></div>
</div>
<div class="tr st" style="top:718.84px">
<div class="c1"><span class="tx">37</span></div>
<div class="c2"><span class="tx"><a class="lnk">Специализации</a></span></div>
<div class="c3"><svg class="ilink" width="18" height="14" viewBox="0 0 18 14"><g fill="none" stroke="#111" stroke-width="1.75" stroke-linecap="round"><path d="M6.17 11.35 L5.57 11.87 A3 3 0 0 1 1.63 7.33 L6.23 3.33 A3 3 0 0 1 10.17 7.87 L9.6 8.4"/><path d="M12.43 2.13 A3 3 0 0 1 16.37 6.67 L11.77 10.67 A3 3 0 0 1 7.83 6.13 L8.43 5.6"/></g></svg><span class="tx url">/specializations</span></div>
<div class="c4"><span class="badge rz">Резерв</span></div>
<div class="c5"><span class="c5in"><svg class="iwarn" width="18" height="16" viewBox="0 0 18 16"><path d="M9 0.3 Q9.7 0.3 10.1 1 L17.7 14.4 Q18.1 15.8 16.8 15.9 L1.2 15.9 Q-0.1 15.8 0.3 14.4 L7.9 1 Q8.3 0.3 9 0.3Z" fill="#f9a50f"/><rect x="8.2" y="4.8" width="1.6" height="7.2" rx=".7" fill="#fff"/><circle cx="9" cy="13.5" r="0.95" fill="#fff"/></svg><span class="agrp" style="width:71.6px"><span class="agbg" style="width:71.6px"></span><span class="ab g" style="left:0px;width:37.0px"><span class="ic"><svg width="18" height="14" viewBox="0 0 18 14"><path d="M9 0.9 C5 0.9 2 3.7 0.9 7 C2 10.3 5 13.1 9 13.1 C13 13.1 16 10.3 17.1 7 C16 3.7 13 0.9 9 0.9Z" fill="none" stroke="#d4f7e0" stroke-width="1.55"/><circle cx="9" cy="7" r="3.1" fill="none" stroke="#d4f7e0" stroke-width="1.65"/><path d="M9.9 8.6 A1.8 1.8 0 0 0 10.6 6.4" fill="none" stroke="#d4f7e0" stroke-width="0.9"/></svg></span></span><span class="ab w ll" style="left:37.0px;width:34.599999999999994px"><span class="ic"><svg width="16" height="16" viewBox="0 0 16 16"><path d="M0.8 15.2 L1.7 11.2 L11.8 1.1 Q13.2 -0.3 14.6 1.1 L14.9 1.4 Q16.3 2.8 14.9 4.2 L4.8 14.3 Z" fill="none" stroke="#6c757d" stroke-width="1.35" stroke-linejoin="round"/><path d="M10.6 2.3 L11.8 1.1 Q13.2 -0.3 14.6 1.1 L14.9 1.4 Q16.3 2.8 14.9 4.2 L13.7 5.4Z" fill="#6c757d"/><path d="M3.3 12.7 L11.5 4.5" stroke="#6c757d" stroke-width="1.2"/><path d="M0.8 15.2 L1.2 13.4 L2.6 14.8Z" fill="#6c757d"/></svg></span></span></span></span></div>
</div>
<div class="tr" style="top:772.48px">
<div class="c1"><span class="tx">36</span></div>
<div class="c2"><span class="tx"><a class="lnk">Статус в лиге</a></span></div>
<div class="c3"><svg class="ilink" width="18" height="14" viewBox="0 0 18 14"><g fill="none" stroke="#111" stroke-width="1.75" stroke-linecap="round"><path d="M6.17 11.35 L5.57 11.87 A3 3 0 0 1 1.63 7.33 L6.23 3.33 A3 3 0 0 1 10.17 7.87 L9.6 8.4"/><path d="M12.43 2.13 A3 3 0 0 1 16.37 6.67 L11.77 10.67 A3 3 0 0 1 7.83 6.13 L8.43 5.6"/></g></svg><span class="tx url">/tariffs</span></div>
<div class="c4"><span class="badge rz">Резерв</span></div>
<div class="c5"><span class="c5in"><svg class="iwarn" width="18" height="16" viewBox="0 0 18 16"><path d="M9 0.3 Q9.7 0.3 10.1 1 L17.7 14.4 Q18.1 15.8 16.8 15.9 L1.2 15.9 Q-0.1 15.8 0.3 14.4 L7.9 1 Q8.3 0.3 9 0.3Z" fill="#f9a50f"/><rect x="8.2" y="4.8" width="1.6" height="7.2" rx=".7" fill="#fff"/><circle cx="9" cy="13.5" r="0.95" fill="#fff"/></svg><span class="agrp" style="width:71.6px"><span class="agbg" style="width:71.6px"></span><span class="ab g" style="left:0px;width:37.0px"><span class="ic"><svg width="18" height="14" viewBox="0 0 18 14"><path d="M9 0.9 C5 0.9 2 3.7 0.9 7 C2 10.3 5 13.1 9 13.1 C13 13.1 16 10.3 17.1 7 C16 3.7 13 0.9 9 0.9Z" fill="none" stroke="#d4f7e0" stroke-width="1.55"/><circle cx="9" cy="7" r="3.1" fill="none" stroke="#d4f7e0" stroke-width="1.65"/><path d="M9.9 8.6 A1.8 1.8 0 0 0 10.6 6.4" fill="none" stroke="#d4f7e0" stroke-width="0.9"/></svg></span></span><span class="ab w ll" style="left:37.0px;width:34.599999999999994px"><span class="ic"><svg width="16" height="16" viewBox="0 0 16 16"><path d="M0.8 15.2 L1.7 11.2 L11.8 1.1 Q13.2 -0.3 14.6 1.1 L14.9 1.4 Q16.3 2.8 14.9 4.2 L4.8 14.3 Z" fill="none" stroke="#6c757d" stroke-width="1.35" stroke-linejoin="round"/><path d="M10.6 2.3 L11.8 1.1 Q13.2 -0.3 14.6 1.1 L14.9 1.4 Q16.3 2.8 14.9 4.2 L13.7 5.4Z" fill="#6c757d"/><path d="M3.3 12.7 L11.5 4.5" stroke="#6c757d" stroke-width="1.2"/><path d="M0.8 15.2 L1.2 13.4 L2.6 14.8Z" fill="#6c757d"/></svg></span></span></span></span></div>
</div>
<div class="tr st" style="top:826.12px">
<div class="c1"><span class="tx">35</span></div>
<div class="c2"><span class="tx"><a class="lnk">Карта сайта</a></span></div>
<div class="c3"><svg class="ilink" width="18" height="14" viewBox="0 0 18 14"><g fill="none" stroke="#111" stroke-width="1.75" stroke-linecap="round"><path d="M6.17 11.35 L5.57 11.87 A3 3 0 0 1 1.63 7.33 L6.23 3.33 A3 3 0 0 1 10.17 7.87 L9.6 8.4"/><path d="M12.43 2.13 A3 3 0 0 1 16.37 6.67 L11.77 10.67 A3 3 0 0 1 7.83 6.13 L8.43 5.6"/></g></svg><span class="tx url">/sitemap</span></div>
<div class="c4"><span class="badge rz">Резерв</span></div>
<div class="c5"><span class="c5in"><svg class="iwarn" width="18" height="16" viewBox="0 0 18 16"><path d="M9 0.3 Q9.7 0.3 10.1 1 L17.7 14.4 Q18.1 15.8 16.8 15.9 L1.2 15.9 Q-0.1 15.8 0.3 14.4 L7.9 1 Q8.3 0.3 9 0.3Z" fill="#f9a50f"/><rect x="8.2" y="4.8" width="1.6" height="7.2" rx=".7" fill="#fff"/><circle cx="9" cy="13.5" r="0.95" fill="#fff"/></svg><span class="agrp" style="width:71.6px"><span class="agbg" style="width:71.6px"></span><span class="ab g" style="left:0px;width:37.0px"><span class="ic"><svg width="18" height="14" viewBox="0 0 18 14"><path d="M9 0.9 C5 0.9 2 3.7 0.9 7 C2 10.3 5 13.1 9 13.1 C13 13.1 16 10.3 17.1 7 C16 3.7 13 0.9 9 0.9Z" fill="none" stroke="#d4f7e0" stroke-width="1.55"/><circle cx="9" cy="7" r="3.1" fill="none" stroke="#d4f7e0" stroke-width="1.65"/><path d="M9.9 8.6 A1.8 1.8 0 0 0 10.6 6.4" fill="none" stroke="#d4f7e0" stroke-width="0.9"/></svg></span></span><span class="ab w ll" style="left:37.0px;width:34.599999999999994px"><span class="ic"><svg width="16" height="16" viewBox="0 0 16 16"><path d="M0.8 15.2 L1.7 11.2 L11.8 1.1 Q13.2 -0.3 14.6 1.1 L14.9 1.4 Q16.3 2.8 14.9 4.2 L4.8 14.3 Z" fill="none" stroke="#6c757d" stroke-width="1.35" stroke-linejoin="round"/><path d="M10.6 2.3 L11.8 1.1 Q13.2 -0.3 14.6 1.1 L14.9 1.4 Q16.3 2.8 14.9 4.2 L13.7 5.4Z" fill="#6c757d"/><path d="M3.3 12.7 L11.5 4.5" stroke="#6c757d" stroke-width="1.2"/><path d="M0.8 15.2 L1.2 13.4 L2.6 14.8Z" fill="#6c757d"/></svg></span></span></span></span></div>
</div>
<div class="tr" style="top:879.76px">
<div class="c1"><span class="tx">34</span></div>
<div class="c2"><span class="tx"><a class="lnk">Оплата</a></span></div>
<div class="c3"><svg class="ilink" width="18" height="14" viewBox="0 0 18 14"><g fill="none" stroke="#111" stroke-width="1.75" stroke-linecap="round"><path d="M6.17 11.35 L5.57 11.87 A3 3 0 0 1 1.63 7.33 L6.23 3.33 A3 3 0 0 1 10.17 7.87 L9.6 8.4"/><path d="M12.43 2.13 A3 3 0 0 1 16.37 6.67 L11.77 10.67 A3 3 0 0 1 7.83 6.13 L8.43 5.6"/></g></svg><span class="tx url">/payment</span></div>
<div class="c4"><span class="badge rz">Резерв</span></div>
<div class="c5"><span class="c5in"><svg class="iwarn" width="18" height="16" viewBox="0 0 18 16"><path d="M9 0.3 Q9.7 0.3 10.1 1 L17.7 14.4 Q18.1 15.8 16.8 15.9 L1.2 15.9 Q-0.1 15.8 0.3 14.4 L7.9 1 Q8.3 0.3 9 0.3Z" fill="#f9a50f"/><rect x="8.2" y="4.8" width="1.6" height="7.2" rx=".7" fill="#fff"/><circle cx="9" cy="13.5" r="0.95" fill="#fff"/></svg><span class="agrp" style="width:71.6px"><span class="agbg" style="width:71.6px"></span><span class="ab g" style="left:0px;width:37.0px"><span class="ic"><svg width="18" height="14" viewBox="0 0 18 14"><path d="M9 0.9 C5 0.9 2 3.7 0.9 7 C2 10.3 5 13.1 9 13.1 C13 13.1 16 10.3 17.1 7 C16 3.7 13 0.9 9 0.9Z" fill="none" stroke="#d4f7e0" stroke-width="1.55"/><circle cx="9" cy="7" r="3.1" fill="none" stroke="#d4f7e0" stroke-width="1.65"/><path d="M9.9 8.6 A1.8 1.8 0 0 0 10.6 6.4" fill="none" stroke="#d4f7e0" stroke-width="0.9"/></svg></span></span><span class="ab w ll" style="left:37.0px;width:34.599999999999994px"><span class="ic"><svg width="16" height="16" viewBox="0 0 16 16"><path d="M0.8 15.2 L1.7 11.2 L11.8 1.1 Q13.2 -0.3 14.6 1.1 L14.9 1.4 Q16.3 2.8 14.9 4.2 L4.8 14.3 Z" fill="none" stroke="#6c757d" stroke-width="1.35" stroke-linejoin="round"/><path d="M10.6 2.3 L11.8 1.1 Q13.2 -0.3 14.6 1.1 L14.9 1.4 Q16.3 2.8 14.9 4.2 L13.7 5.4Z" fill="#6c757d"/><path d="M3.3 12.7 L11.5 4.5" stroke="#6c757d" stroke-width="1.2"/><path d="M0.8 15.2 L1.2 13.4 L2.6 14.8Z" fill="#6c757d"/></svg></span></span></span></span></div>
</div>
<div class="tr st" style="top:933.40px">
<div class="c1"><span class="tx">33</span></div>
<div class="c2"><span class="tx"><a class="lnk">Инструкции по оплате</a></span></div>
<div class="c3"><svg class="ilink" width="18" height="14" viewBox="0 0 18 14"><g fill="none" stroke="#111" stroke-width="1.75" stroke-linecap="round"><path d="M6.17 11.35 L5.57 11.87 A3 3 0 0 1 1.63 7.33 L6.23 3.33 A3 3 0 0 1 10.17 7.87 L9.6 8.4"/><path d="M12.43 2.13 A3 3 0 0 1 16.37 6.67 L11.77 10.67 A3 3 0 0 1 7.83 6.13 L8.43 5.6"/></g></svg><span class="tx url">/payment-instructions</span></div>
<div class="c4"><span class="badge pr">Простая</span></div>
<div class="c5"><span class="c5in"><svg class="iwarn" width="18" height="16" viewBox="0 0 18 16"><path d="M9 0.3 Q9.7 0.3 10.1 1 L17.7 14.4 Q18.1 15.8 16.8 15.9 L1.2 15.9 Q-0.1 15.8 0.3 14.4 L7.9 1 Q8.3 0.3 9 0.3Z" fill="#f9a50f"/><rect x="8.2" y="4.8" width="1.6" height="7.2" rx=".7" fill="#fff"/><circle cx="9" cy="13.5" r="0.95" fill="#fff"/></svg><span class="agrp" style="width:169.6px"><span class="agbg" style="width:169.6px"></span><span class="ab w fl" style="left:0px;width:32.7px"><span class="ic"><svg width="14" height="14" viewBox="0 0 14 14"><g stroke="#6c757d" stroke-width="1.55" stroke-linecap="round"><path d="M1.6 0.9 H8.6"/><path d="M1.6 4.8 H13.4"/><path d="M1.6 8.6 H8.6"/><path d="M1.6 12.6 H13.4"/></g></svg></span></span><span class="ab g" style="left:32.7px;width:37.099999999999994px"><span class="ic"><svg width="18" height="14" viewBox="0 0 18 14"><path d="M9 0.9 C5 0.9 2 3.7 0.9 7 C2 10.3 5 13.1 9 13.1 C13 13.1 16 10.3 17.1 7 C16 3.7 13 0.9 9 0.9Z" fill="none" stroke="#d4f7e0" stroke-width="1.55"/><circle cx="9" cy="7" r="3.1" fill="none" stroke="#d4f7e0" stroke-width="1.65"/><path d="M9.9 8.6 A1.8 1.8 0 0 0 10.6 6.4" fill="none" stroke="#d4f7e0" stroke-width="0.9"/></svg></span></span><span class="ab w" style="left:69.8px;width:34.60000000000001px"><span class="ic"><svg width="16" height="16" viewBox="0 0 16 16"><path d="M0.8 15.2 L1.7 11.2 L11.8 1.1 Q13.2 -0.3 14.6 1.1 L14.9 1.4 Q16.3 2.8 14.9 4.2 L4.8 14.3 Z" fill="none" stroke="#6c757d" stroke-width="1.35" stroke-linejoin="round"/><path d="M10.6 2.3 L11.8 1.1 Q13.2 -0.3 14.6 1.1 L14.9 1.4 Q16.3 2.8 14.9 4.2 L13.7 5.4Z" fill="#6c757d"/><path d="M3.3 12.7 L11.5 4.5" stroke="#6c757d" stroke-width="1.2"/><path d="M0.8 15.2 L1.2 13.4 L2.6 14.8Z" fill="#6c757d"/></svg></span></span><span class="ab w" style="left:104.4px;width:32.599999999999994px"><span class="ic"><svg width="14" height="16" viewBox="0 0 14 16"><g fill="none" stroke="#6c757d"><path d="M0.6 3.2 H13.4" stroke-width="1.5" stroke-linecap="round"/><path d="M4.6 3 V2.1 Q4.6 1 5.7 1 H8.3 Q9.4 1 9.4 2.1 V3" stroke-width="1.4"/><path d="M2 3.6 L2.6 14 Q2.7 15.2 3.9 15.2 H10.1 Q11.3 15.2 11.4 14 L12 3.6" stroke-width="1.4"/><path d="M4.8 6 V12.6 M7 6 V12.6 M9.2 6 V12.6" stroke-width="1"/></g></svg></span></span><span class="ab w ll" style="left:137.0px;width:32.599999999999994px"><span class="ic"><svg width="14" height="16" viewBox="0 0 14 16"><g fill="#6c757d"><rect x="0.2" y="2.2" width="13.6" height="1.9" rx=".7"/><path d="M4.4 2.4 L5 0.7 H9 L9.6 2.4Z"/><path d="M1.3 4.6 H12.7 L11.8 14.4 Q11.7 15.4 10.6 15.4 H3.4 Q2.3 15.4 2.2 14.4Z"/></g></svg></span></span><span class="asep" style="left:103.9px"></span><span class="asep" style="left:136.5px"></span></span></span></div>
</div>
<div class="tr" style="top:987.04px">
<div class="c1"><span class="tx">32</span></div>
<div class="c2"><span class="tx"><a class="lnk">Публичная оферта</a></span></div>
<div class="c3"><svg class="ilink" width="18" height="14" viewBox="0 0 18 14"><g fill="none" stroke="#111" stroke-width="1.75" stroke-linecap="round"><path d="M6.17 11.35 L5.57 11.87 A3 3 0 0 1 1.63 7.33 L6.23 3.33 A3 3 0 0 1 10.17 7.87 L9.6 8.4"/><path d="M12.43 2.13 A3 3 0 0 1 16.37 6.67 L11.77 10.67 A3 3 0 0 1 7.83 6.13 L8.43 5.6"/></g></svg><span class="tx url">/public-offer</span></div>
<div class="c4"><span class="badge pr">Простая</span></div>
<div class="c5"><span class="c5in"><svg class="iwarn" width="18" height="16" viewBox="0 0 18 16"><path d="M9 0.3 Q9.7 0.3 10.1 1 L17.7 14.4 Q18.1 15.8 16.8 15.9 L1.2 15.9 Q-0.1 15.8 0.3 14.4 L7.9 1 Q8.3 0.3 9 0.3Z" fill="#f9a50f"/><rect x="8.2" y="4.8" width="1.6" height="7.2" rx=".7" fill="#fff"/><circle cx="9" cy="13.5" r="0.95" fill="#fff"/></svg><span class="agrp" style="width:169.6px"><span class="agbg" style="width:169.6px"></span><span class="ab w fl" style="left:0px;width:32.7px"><span class="ic"><svg width="14" height="14" viewBox="0 0 14 14"><g stroke="#6c757d" stroke-width="1.55" stroke-linecap="round"><path d="M1.6 0.9 H8.6"/><path d="M1.6 4.8 H13.4"/><path d="M1.6 8.6 H8.6"/><path d="M1.6 12.6 H13.4"/></g></svg></span></span><span class="ab g" style="left:32.7px;width:37.099999999999994px"><span class="ic"><svg width="18" height="14" viewBox="0 0 18 14"><path d="M9 0.9 C5 0.9 2 3.7 0.9 7 C2 10.3 5 13.1 9 13.1 C13 13.1 16 10.3 17.1 7 C16 3.7 13 0.9 9 0.9Z" fill="none" stroke="#d4f7e0" stroke-width="1.55"/><circle cx="9" cy="7" r="3.1" fill="none" stroke="#d4f7e0" stroke-width="1.65"/><path d="M9.9 8.6 A1.8 1.8 0 0 0 10.6 6.4" fill="none" stroke="#d4f7e0" stroke-width="0.9"/></svg></span></span><span class="ab w" style="left:69.8px;width:34.60000000000001px"><span class="ic"><svg width="16" height="16" viewBox="0 0 16 16"><path d="M0.8 15.2 L1.7 11.2 L11.8 1.1 Q13.2 -0.3 14.6 1.1 L14.9 1.4 Q16.3 2.8 14.9 4.2 L4.8 14.3 Z" fill="none" stroke="#6c757d" stroke-width="1.35" stroke-linejoin="round"/><path d="M10.6 2.3 L11.8 1.1 Q13.2 -0.3 14.6 1.1 L14.9 1.4 Q16.3 2.8 14.9 4.2 L13.7 5.4Z" fill="#6c757d"/><path d="M3.3 12.7 L11.5 4.5" stroke="#6c757d" stroke-width="1.2"/><path d="M0.8 15.2 L1.2 13.4 L2.6 14.8Z" fill="#6c757d"/></svg></span></span><span class="ab w" style="left:104.4px;width:32.599999999999994px"><span class="ic"><svg width="14" height="16" viewBox="0 0 14 16"><g fill="none" stroke="#6c757d"><path d="M0.6 3.2 H13.4" stroke-width="1.5" stroke-linecap="round"/><path d="M4.6 3 V2.1 Q4.6 1 5.7 1 H8.3 Q9.4 1 9.4 2.1 V3" stroke-width="1.4"/><path d="M2 3.6 L2.6 14 Q2.7 15.2 3.9 15.2 H10.1 Q11.3 15.2 11.4 14 L12 3.6" stroke-width="1.4"/><path d="M4.8 6 V12.6 M7 6 V12.6 M9.2 6 V12.6" stroke-width="1"/></g></svg></span></span><span class="ab w ll" style="left:137.0px;width:32.599999999999994px"><span class="ic"><svg width="14" height="16" viewBox="0 0 14 16"><g fill="#6c757d"><rect x="0.2" y="2.2" width="13.6" height="1.9" rx=".7"/><path d="M4.4 2.4 L5 0.7 H9 L9.6 2.4Z"/><path d="M1.3 4.6 H12.7 L11.8 14.4 Q11.7 15.4 10.6 15.4 H3.4 Q2.3 15.4 2.2 14.4Z"/></g></svg></span></span><span class="asep" style="left:103.9px"></span><span class="asep" style="left:136.5px"></span></span></span></div>
</div>
<div class="tr st" style="top:1040.68px">
<div class="c1"><span class="tx">31</span></div>
<div class="c2"><span class="tx"><a class="lnk">Пользовательское соглашение</a></span></div>
<div class="c3"><svg class="ilink" width="18" height="14" viewBox="0 0 18 14"><g fill="none" stroke="#111" stroke-width="1.75" stroke-linecap="round"><path d="M6.17 11.35 L5.57 11.87 A3 3 0 0 1 1.63 7.33 L6.23 3.33 A3 3 0 0 1 10.17 7.87 L9.6 8.4"/><path d="M12.43 2.13 A3 3 0 0 1 16.37 6.67 L11.77 10.67 A3 3 0 0 1 7.83 6.13 L8.43 5.6"/></g></svg><span class="tx url">/user-agreement</span></div>
<div class="c4"><span class="badge pr">Простая</span></div>
<div class="c5"><span class="c5in"><svg class="iwarn" width="18" height="16" viewBox="0 0 18 16"><path d="M9 0.3 Q9.7 0.3 10.1 1 L17.7 14.4 Q18.1 15.8 16.8 15.9 L1.2 15.9 Q-0.1 15.8 0.3 14.4 L7.9 1 Q8.3 0.3 9 0.3Z" fill="#f9a50f"/><rect x="8.2" y="4.8" width="1.6" height="7.2" rx=".7" fill="#fff"/><circle cx="9" cy="13.5" r="0.95" fill="#fff"/></svg><span class="agrp" style="width:169.6px"><span class="agbg" style="width:169.6px"></span><span class="ab w fl" style="left:0px;width:32.7px"><span class="ic"><svg width="14" height="14" viewBox="0 0 14 14"><g stroke="#6c757d" stroke-width="1.55" stroke-linecap="round"><path d="M1.6 0.9 H8.6"/><path d="M1.6 4.8 H13.4"/><path d="M1.6 8.6 H8.6"/><path d="M1.6 12.6 H13.4"/></g></svg></span></span><span class="ab g" style="left:32.7px;width:37.099999999999994px"><span class="ic"><svg width="18" height="14" viewBox="0 0 18 14"><path d="M9 0.9 C5 0.9 2 3.7 0.9 7 C2 10.3 5 13.1 9 13.1 C13 13.1 16 10.3 17.1 7 C16 3.7 13 0.9 9 0.9Z" fill="none" stroke="#d4f7e0" stroke-width="1.55"/><circle cx="9" cy="7" r="3.1" fill="none" stroke="#d4f7e0" stroke-width="1.65"/><path d="M9.9 8.6 A1.8 1.8 0 0 0 10.6 6.4" fill="none" stroke="#d4f7e0" stroke-width="0.9"/></svg></span></span><span class="ab w" style="left:69.8px;width:34.60000000000001px"><span class="ic"><svg width="16" height="16" viewBox="0 0 16 16"><path d="M0.8 15.2 L1.7 11.2 L11.8 1.1 Q13.2 -0.3 14.6 1.1 L14.9 1.4 Q16.3 2.8 14.9 4.2 L4.8 14.3 Z" fill="none" stroke="#6c757d" stroke-width="1.35" stroke-linejoin="round"/><path d="M10.6 2.3 L11.8 1.1 Q13.2 -0.3 14.6 1.1 L14.9 1.4 Q16.3 2.8 14.9 4.2 L13.7 5.4Z" fill="#6c757d"/><path d="M3.3 12.7 L11.5 4.5" stroke="#6c757d" stroke-width="1.2"/><path d="M0.8 15.2 L1.2 13.4 L2.6 14.8Z" fill="#6c757d"/></svg></span></span><span class="ab w" style="left:104.4px;width:32.599999999999994px"><span class="ic"><svg width="14" height="16" viewBox="0 0 14 16"><g fill="none" stroke="#6c757d"><path d="M0.6 3.2 H13.4" stroke-width="1.5" stroke-linecap="round"/><path d="M4.6 3 V2.1 Q4.6 1 5.7 1 H8.3 Q9.4 1 9.4 2.1 V3" stroke-width="1.4"/><path d="M2 3.6 L2.6 14 Q2.7 15.2 3.9 15.2 H10.1 Q11.3 15.2 11.4 14 L12 3.6" stroke-width="1.4"/><path d="M4.8 6 V12.6 M7 6 V12.6 M9.2 6 V12.6" stroke-width="1"/></g></svg></span></span><span class="ab w ll" style="left:137.0px;width:32.599999999999994px"><span class="ic"><svg width="14" height="16" viewBox="0 0 14 16"><g fill="#6c757d"><rect x="0.2" y="2.2" width="13.6" height="1.9" rx=".7"/><path d="M4.4 2.4 L5 0.7 H9 L9.6 2.4Z"/><path d="M1.3 4.6 H12.7 L11.8 14.4 Q11.7 15.4 10.6 15.4 H3.4 Q2.3 15.4 2.2 14.4Z"/></g></svg></span></span><span class="asep" style="left:103.9px"></span><span class="asep" style="left:136.5px"></span></span></span></div>
</div>
<div class="tr" style="top:1094.32px">
<div class="c1"><span class="tx">30</span></div>
<div class="c2"><span class="tx"><a class="lnk">Политика обработки персональных данных</a></span></div>
<div class="c3"><svg class="ilink" width="18" height="14" viewBox="0 0 18 14"><g fill="none" stroke="#111" stroke-width="1.75" stroke-linecap="round"><path d="M6.17 11.35 L5.57 11.87 A3 3 0 0 1 1.63 7.33 L6.23 3.33 A3 3 0 0 1 10.17 7.87 L9.6 8.4"/><path d="M12.43 2.13 A3 3 0 0 1 16.37 6.67 L11.77 10.67 A3 3 0 0 1 7.83 6.13 L8.43 5.6"/></g></svg><span class="tx url">/privacy-policy</span></div>
<div class="c4"><span class="badge pr">Простая</span></div>
<div class="c5"><span class="c5in"><svg class="iwarn" width="18" height="16" viewBox="0 0 18 16"><path d="M9 0.3 Q9.7 0.3 10.1 1 L17.7 14.4 Q18.1 15.8 16.8 15.9 L1.2 15.9 Q-0.1 15.8 0.3 14.4 L7.9 1 Q8.3 0.3 9 0.3Z" fill="#f9a50f"/><rect x="8.2" y="4.8" width="1.6" height="7.2" rx=".7" fill="#fff"/><circle cx="9" cy="13.5" r="0.95" fill="#fff"/></svg><span class="agrp" style="width:169.6px"><span class="agbg" style="width:169.6px"></span><span class="ab w fl" style="left:0px;width:32.7px"><span class="ic"><svg width="14" height="14" viewBox="0 0 14 14"><g stroke="#6c757d" stroke-width="1.55" stroke-linecap="round"><path d="M1.6 0.9 H8.6"/><path d="M1.6 4.8 H13.4"/><path d="M1.6 8.6 H8.6"/><path d="M1.6 12.6 H13.4"/></g></svg></span></span><span class="ab g" style="left:32.7px;width:37.099999999999994px"><span class="ic"><svg width="18" height="14" viewBox="0 0 18 14"><path d="M9 0.9 C5 0.9 2 3.7 0.9 7 C2 10.3 5 13.1 9 13.1 C13 13.1 16 10.3 17.1 7 C16 3.7 13 0.9 9 0.9Z" fill="none" stroke="#d4f7e0" stroke-width="1.55"/><circle cx="9" cy="7" r="3.1" fill="none" stroke="#d4f7e0" stroke-width="1.65"/><path d="M9.9 8.6 A1.8 1.8 0 0 0 10.6 6.4" fill="none" stroke="#d4f7e0" stroke-width="0.9"/></svg></span></span><span class="ab w" style="left:69.8px;width:34.60000000000001px"><span class="ic"><svg width="16" height="16" viewBox="0 0 16 16"><path d="M0.8 15.2 L1.7 11.2 L11.8 1.1 Q13.2 -0.3 14.6 1.1 L14.9 1.4 Q16.3 2.8 14.9 4.2 L4.8 14.3 Z" fill="none" stroke="#6c757d" stroke-width="1.35" stroke-linejoin="round"/><path d="M10.6 2.3 L11.8 1.1 Q13.2 -0.3 14.6 1.1 L14.9 1.4 Q16.3 2.8 14.9 4.2 L13.7 5.4Z" fill="#6c757d"/><path d="M3.3 12.7 L11.5 4.5" stroke="#6c757d" stroke-width="1.2"/><path d="M0.8 15.2 L1.2 13.4 L2.6 14.8Z" fill="#6c757d"/></svg></span></span><span class="ab w" style="left:104.4px;width:32.599999999999994px"><span class="ic"><svg width="14" height="16" viewBox="0 0 14 16"><g fill="none" stroke="#6c757d"><path d="M0.6 3.2 H13.4" stroke-width="1.5" stroke-linecap="round"/><path d="M4.6 3 V2.1 Q4.6 1 5.7 1 H8.3 Q9.4 1 9.4 2.1 V3" stroke-width="1.4"/><path d="M2 3.6 L2.6 14 Q2.7 15.2 3.9 15.2 H10.1 Q11.3 15.2 11.4 14 L12 3.6" stroke-width="1.4"/><path d="M4.8 6 V12.6 M7 6 V12.6 M9.2 6 V12.6" stroke-width="1"/></g></svg></span></span><span class="ab w ll" style="left:137.0px;width:32.599999999999994px"><span class="ic"><svg width="14" height="16" viewBox="0 0 14 16"><g fill="#6c757d"><rect x="0.2" y="2.2" width="13.6" height="1.9" rx=".7"/><path d="M4.4 2.4 L5 0.7 H9 L9.6 2.4Z"/><path d="M1.3 4.6 H12.7 L11.8 14.4 Q11.7 15.4 10.6 15.4 H3.4 Q2.3 15.4 2.2 14.4Z"/></g></svg></span></span><span class="asep" style="left:103.9px"></span><span class="asep" style="left:136.5px"></span></span></span></div>
</div>
<div class="tr st" style="top:1147.96px">
<div class="c1"><span class="tx">29</span></div>
<div class="c2"><span class="tx"><a class="lnk">Модальности</a></span></div>
<div class="c3"><svg class="ilink" width="18" height="14" viewBox="0 0 18 14"><g fill="none" stroke="#111" stroke-width="1.75" stroke-linecap="round"><path d="M6.17 11.35 L5.57 11.87 A3 3 0 0 1 1.63 7.33 L6.23 3.33 A3 3 0 0 1 10.17 7.87 L9.6 8.4"/><path d="M12.43 2.13 A3 3 0 0 1 16.37 6.67 L11.77 10.67 A3 3 0 0 1 7.83 6.13 L8.43 5.6"/></g></svg><span class="tx url">/modalities</span></div>
<div class="c4"><span class="badge rz">Резерв</span></div>
<div class="c5"><span class="c5in"><svg class="iwarn" width="18" height="16" viewBox="0 0 18 16"><path d="M9 0.3 Q9.7 0.3 10.1 1 L17.7 14.4 Q18.1 15.8 16.8 15.9 L1.2 15.9 Q-0.1 15.8 0.3 14.4 L7.9 1 Q8.3 0.3 9 0.3Z" fill="#f9a50f"/><rect x="8.2" y="4.8" width="1.6" height="7.2" rx=".7" fill="#fff"/><circle cx="9" cy="13.5" r="0.95" fill="#fff"/></svg><span class="agrp" style="width:71.6px"><span class="agbg" style="width:71.6px"></span><span class="ab g" style="left:0px;width:37.0px"><span class="ic"><svg width="18" height="14" viewBox="0 0 18 14"><path d="M9 0.9 C5 0.9 2 3.7 0.9 7 C2 10.3 5 13.1 9 13.1 C13 13.1 16 10.3 17.1 7 C16 3.7 13 0.9 9 0.9Z" fill="none" stroke="#d4f7e0" stroke-width="1.55"/><circle cx="9" cy="7" r="3.1" fill="none" stroke="#d4f7e0" stroke-width="1.65"/><path d="M9.9 8.6 A1.8 1.8 0 0 0 10.6 6.4" fill="none" stroke="#d4f7e0" stroke-width="0.9"/></svg></span></span><span class="ab w ll" style="left:37.0px;width:34.599999999999994px"><span class="ic"><svg width="16" height="16" viewBox="0 0 16 16"><path d="M0.8 15.2 L1.7 11.2 L11.8 1.1 Q13.2 -0.3 14.6 1.1 L14.9 1.4 Q16.3 2.8 14.9 4.2 L4.8 14.3 Z" fill="none" stroke="#6c757d" stroke-width="1.35" stroke-linejoin="round"/><path d="M10.6 2.3 L11.8 1.1 Q13.2 -0.3 14.6 1.1 L14.9 1.4 Q16.3 2.8 14.9 4.2 L13.7 5.4Z" fill="#6c757d"/><path d="M3.3 12.7 L11.5 4.5" stroke="#6c757d" stroke-width="1.2"/><path d="M0.8 15.2 L1.2 13.4 L2.6 14.8Z" fill="#6c757d"/></svg></span></span></span></span></div>
</div>
<div class="tr" style="top:1201.60px">
<div class="c1"><span class="tx">28</span></div>
<div class="c2"><span class="tx"><a class="lnk">Региональные отделения</a></span></div>
<div class="c3"><svg class="ilink" width="18" height="14" viewBox="0 0 18 14"><g fill="none" stroke="#111" stroke-width="1.75" stroke-linecap="round"><path d="M6.17 11.35 L5.57 11.87 A3 3 0 0 1 1.63 7.33 L6.23 3.33 A3 3 0 0 1 10.17 7.87 L9.6 8.4"/><path d="M12.43 2.13 A3 3 0 0 1 16.37 6.67 L11.77 10.67 A3 3 0 0 1 7.83 6.13 L8.43 5.6"/></g></svg><span class="tx url">/regional-offices</span></div>
<div class="c4"><span class="badge pr">Простая</span></div>
<div class="c5"><span class="c5in"><svg class="iwarn" width="18" height="16" viewBox="0 0 18 16"><path d="M9 0.3 Q9.7 0.3 10.1 1 L17.7 14.4 Q18.1 15.8 16.8 15.9 L1.2 15.9 Q-0.1 15.8 0.3 14.4 L7.9 1 Q8.3 0.3 9 0.3Z" fill="#f9a50f"/><rect x="8.2" y="4.8" width="1.6" height="7.2" rx=".7" fill="#fff"/><circle cx="9" cy="13.5" r="0.95" fill="#fff"/></svg><span class="agrp" style="width:169.6px"><span class="agbg" style="width:169.6px"></span><span class="ab w fl" style="left:0px;width:32.7px"><span class="ic"><svg width="14" height="14" viewBox="0 0 14 14"><g stroke="#6c757d" stroke-width="1.55" stroke-linecap="round"><path d="M1.6 0.9 H8.6"/><path d="M1.6 4.8 H13.4"/><path d="M1.6 8.6 H8.6"/><path d="M1.6 12.6 H13.4"/></g></svg></span></span><span class="ab g" style="left:32.7px;width:37.099999999999994px"><span class="ic"><svg width="18" height="14" viewBox="0 0 18 14"><path d="M9 0.9 C5 0.9 2 3.7 0.9 7 C2 10.3 5 13.1 9 13.1 C13 13.1 16 10.3 17.1 7 C16 3.7 13 0.9 9 0.9Z" fill="none" stroke="#d4f7e0" stroke-width="1.55"/><circle cx="9" cy="7" r="3.1" fill="none" stroke="#d4f7e0" stroke-width="1.65"/><path d="M9.9 8.6 A1.8 1.8 0 0 0 10.6 6.4" fill="none" stroke="#d4f7e0" stroke-width="0.9"/></svg></span></span><span class="ab w" style="left:69.8px;width:34.60000000000001px"><span class="ic"><svg width="16" height="16" viewBox="0 0 16 16"><path d="M0.8 15.2 L1.7 11.2 L11.8 1.1 Q13.2 -0.3 14.6 1.1 L14.9 1.4 Q16.3 2.8 14.9 4.2 L4.8 14.3 Z" fill="none" stroke="#6c757d" stroke-width="1.35" stroke-linejoin="round"/><path d="M10.6 2.3 L11.8 1.1 Q13.2 -0.3 14.6 1.1 L14.9 1.4 Q16.3 2.8 14.9 4.2 L13.7 5.4Z" fill="#6c757d"/><path d="M3.3 12.7 L11.5 4.5" stroke="#6c757d" stroke-width="1.2"/><path d="M0.8 15.2 L1.2 13.4 L2.6 14.8Z" fill="#6c757d"/></svg></span></span><span class="ab w" style="left:104.4px;width:32.599999999999994px"><span class="ic"><svg width="14" height="16" viewBox="0 0 14 16"><g fill="none" stroke="#6c757d"><path d="M0.6 3.2 H13.4" stroke-width="1.5" stroke-linecap="round"/><path d="M4.6 3 V2.1 Q4.6 1 5.7 1 H8.3 Q9.4 1 9.4 2.1 V3" stroke-width="1.4"/><path d="M2 3.6 L2.6 14 Q2.7 15.2 3.9 15.2 H10.1 Q11.3 15.2 11.4 14 L12 3.6" stroke-width="1.4"/><path d="M4.8 6 V12.6 M7 6 V12.6 M9.2 6 V12.6" stroke-width="1"/></g></svg></span></span><span class="ab w ll" style="left:137.0px;width:32.599999999999994px"><span class="ic"><svg width="14" height="16" viewBox="0 0 14 16"><g fill="#6c757d"><rect x="0.2" y="2.2" width="13.6" height="1.9" rx=".7"/><path d="M4.4 2.4 L5 0.7 H9 L9.6 2.4Z"/><path d="M1.3 4.6 H12.7 L11.8 14.4 Q11.7 15.4 10.6 15.4 H3.4 Q2.3 15.4 2.2 14.4Z"/></g></svg></span></span><span class="asep" style="left:103.9px"></span><span class="asep" style="left:136.5px"></span></span></span></div>
</div>
<div class="tr st" style="top:1255.24px">
<div class="c1"><span class="tx">27</span></div>
<div class="c2"><span class="tx"><a class="lnk">Для спонсоров и партнеров</a></span></div>
<div class="c3"><svg class="ilink" width="18" height="14" viewBox="0 0 18 14"><g fill="none" stroke="#111" stroke-width="1.75" stroke-linecap="round"><path d="M6.17 11.35 L5.57 11.87 A3 3 0 0 1 1.63 7.33 L6.23 3.33 A3 3 0 0 1 10.17 7.87 L9.6 8.4"/><path d="M12.43 2.13 A3 3 0 0 1 16.37 6.67 L11.77 10.67 A3 3 0 0 1 7.83 6.13 L8.43 5.6"/></g></svg><span class="tx url">/sponsors-partners</span></div>
<div class="c4"><span class="badge pr">Простая</span></div>
<div class="c5"><span class="c5in"><svg class="iwarn" width="18" height="16" viewBox="0 0 18 16"><path d="M9 0.3 Q9.7 0.3 10.1 1 L17.7 14.4 Q18.1 15.8 16.8 15.9 L1.2 15.9 Q-0.1 15.8 0.3 14.4 L7.9 1 Q8.3 0.3 9 0.3Z" fill="#f9a50f"/><rect x="8.2" y="4.8" width="1.6" height="7.2" rx=".7" fill="#fff"/><circle cx="9" cy="13.5" r="0.95" fill="#fff"/></svg><span class="agrp" style="width:169.6px"><span class="agbg" style="width:169.6px"></span><span class="ab w fl" style="left:0px;width:32.7px"><span class="ic"><svg width="14" height="14" viewBox="0 0 14 14"><g stroke="#6c757d" stroke-width="1.55" stroke-linecap="round"><path d="M1.6 0.9 H8.6"/><path d="M1.6 4.8 H13.4"/><path d="M1.6 8.6 H8.6"/><path d="M1.6 12.6 H13.4"/></g></svg></span></span><span class="ab g" style="left:32.7px;width:37.099999999999994px"><span class="ic"><svg width="18" height="14" viewBox="0 0 18 14"><path d="M9 0.9 C5 0.9 2 3.7 0.9 7 C2 10.3 5 13.1 9 13.1 C13 13.1 16 10.3 17.1 7 C16 3.7 13 0.9 9 0.9Z" fill="none" stroke="#d4f7e0" stroke-width="1.55"/><circle cx="9" cy="7" r="3.1" fill="none" stroke="#d4f7e0" stroke-width="1.65"/><path d="M9.9 8.6 A1.8 1.8 0 0 0 10.6 6.4" fill="none" stroke="#d4f7e0" stroke-width="0.9"/></svg></span></span><span class="ab w" style="left:69.8px;width:34.60000000000001px"><span class="ic"><svg width="16" height="16" viewBox="0 0 16 16"><path d="M0.8 15.2 L1.7 11.2 L11.8 1.1 Q13.2 -0.3 14.6 1.1 L14.9 1.4 Q16.3 2.8 14.9 4.2 L4.8 14.3 Z" fill="none" stroke="#6c757d" stroke-width="1.35" stroke-linejoin="round"/><path d="M10.6 2.3 L11.8 1.1 Q13.2 -0.3 14.6 1.1 L14.9 1.4 Q16.3 2.8 14.9 4.2 L13.7 5.4Z" fill="#6c757d"/><path d="M3.3 12.7 L11.5 4.5" stroke="#6c757d" stroke-width="1.2"/><path d="M0.8 15.2 L1.2 13.4 L2.6 14.8Z" fill="#6c757d"/></svg></span></span><span class="ab w" style="left:104.4px;width:32.599999999999994px"><span class="ic"><svg width="14" height="16" viewBox="0 0 14 16"><g fill="none" stroke="#6c757d"><path d="M0.6 3.2 H13.4" stroke-width="1.5" stroke-linecap="round"/><path d="M4.6 3 V2.1 Q4.6 1 5.7 1 H8.3 Q9.4 1 9.4 2.1 V3" stroke-width="1.4"/><path d="M2 3.6 L2.6 14 Q2.7 15.2 3.9 15.2 H10.1 Q11.3 15.2 11.4 14 L12 3.6" stroke-width="1.4"/><path d="M4.8 6 V12.6 M7 6 V12.6 M9.2 6 V12.6" stroke-width="1"/></g></svg></span></span><span class="ab w ll" style="left:137.0px;width:32.599999999999994px"><span class="ic"><svg width="14" height="16" viewBox="0 0 14 16"><g fill="#6c757d"><rect x="0.2" y="2.2" width="13.6" height="1.9" rx=".7"/><path d="M4.4 2.4 L5 0.7 H9 L9.6 2.4Z"/><path d="M1.3 4.6 H12.7 L11.8 14.4 Q11.7 15.4 10.6 15.4 H3.4 Q2.3 15.4 2.2 14.4Z"/></g></svg></span></span><span class="asep" style="left:103.9px"></span><span class="asep" style="left:136.5px"></span></span></span></div>
</div>
<div class="tr" style="top:1308.88px">
<div class="c1"><span class="tx">26</span></div>
<div class="c2"><span class="tx"><a class="lnk">Контактная информация</a></span></div>
<div class="c3"><svg class="ilink" width="18" height="14" viewBox="0 0 18 14"><g fill="none" stroke="#111" stroke-width="1.75" stroke-linecap="round"><path d="M6.17 11.35 L5.57 11.87 A3 3 0 0 1 1.63 7.33 L6.23 3.33 A3 3 0 0 1 10.17 7.87 L9.6 8.4"/><path d="M12.43 2.13 A3 3 0 0 1 16.37 6.67 L11.77 10.67 A3 3 0 0 1 7.83 6.13 L8.43 5.6"/></g></svg><span class="tx url">/contacts</span></div>
<div class="c4"><span class="badge pr">Простая</span></div>
<div class="c5"><span class="c5in"><svg class="iwarn" width="18" height="16" viewBox="0 0 18 16"><path d="M9 0.3 Q9.7 0.3 10.1 1 L17.7 14.4 Q18.1 15.8 16.8 15.9 L1.2 15.9 Q-0.1 15.8 0.3 14.4 L7.9 1 Q8.3 0.3 9 0.3Z" fill="#f9a50f"/><rect x="8.2" y="4.8" width="1.6" height="7.2" rx=".7" fill="#fff"/><circle cx="9" cy="13.5" r="0.95" fill="#fff"/></svg><span class="agrp" style="width:169.6px"><span class="agbg" style="width:169.6px"></span><span class="ab w fl" style="left:0px;width:32.7px"><span class="ic"><svg width="14" height="14" viewBox="0 0 14 14"><g stroke="#6c757d" stroke-width="1.55" stroke-linecap="round"><path d="M1.6 0.9 H8.6"/><path d="M1.6 4.8 H13.4"/><path d="M1.6 8.6 H8.6"/><path d="M1.6 12.6 H13.4"/></g></svg></span></span><span class="ab g" style="left:32.7px;width:37.099999999999994px"><span class="ic"><svg width="18" height="14" viewBox="0 0 18 14"><path d="M9 0.9 C5 0.9 2 3.7 0.9 7 C2 10.3 5 13.1 9 13.1 C13 13.1 16 10.3 17.1 7 C16 3.7 13 0.9 9 0.9Z" fill="none" stroke="#d4f7e0" stroke-width="1.55"/><circle cx="9" cy="7" r="3.1" fill="none" stroke="#d4f7e0" stroke-width="1.65"/><path d="M9.9 8.6 A1.8 1.8 0 0 0 10.6 6.4" fill="none" stroke="#d4f7e0" stroke-width="0.9"/></svg></span></span><span class="ab w" style="left:69.8px;width:34.60000000000001px"><span class="ic"><svg width="16" height="16" viewBox="0 0 16 16"><path d="M0.8 15.2 L1.7 11.2 L11.8 1.1 Q13.2 -0.3 14.6 1.1 L14.9 1.4 Q16.3 2.8 14.9 4.2 L4.8 14.3 Z" fill="none" stroke="#6c757d" stroke-width="1.35" stroke-linejoin="round"/><path d="M10.6 2.3 L11.8 1.1 Q13.2 -0.3 14.6 1.1 L14.9 1.4 Q16.3 2.8 14.9 4.2 L13.7 5.4Z" fill="#6c757d"/><path d="M3.3 12.7 L11.5 4.5" stroke="#6c757d" stroke-width="1.2"/><path d="M0.8 15.2 L1.2 13.4 L2.6 14.8Z" fill="#6c757d"/></svg></span></span><span class="ab w" style="left:104.4px;width:32.599999999999994px"><span class="ic"><svg width="14" height="16" viewBox="0 0 14 16"><g fill="none" stroke="#6c757d"><path d="M0.6 3.2 H13.4" stroke-width="1.5" stroke-linecap="round"/><path d="M4.6 3 V2.1 Q4.6 1 5.7 1 H8.3 Q9.4 1 9.4 2.1 V3" stroke-width="1.4"/><path d="M2 3.6 L2.6 14 Q2.7 15.2 3.9 15.2 H10.1 Q11.3 15.2 11.4 14 L12 3.6" stroke-width="1.4"/><path d="M4.8 6 V12.6 M7 6 V12.6 M9.2 6 V12.6" stroke-width="1"/></g></svg></span></span><span class="ab w ll" style="left:137.0px;width:32.599999999999994px"><span class="ic"><svg width="14" height="16" viewBox="0 0 14 16"><g fill="#6c757d"><rect x="0.2" y="2.2" width="13.6" height="1.9" rx=".7"/><path d="M4.4 2.4 L5 0.7 H9 L9.6 2.4Z"/><path d="M1.3 4.6 H12.7 L11.8 14.4 Q11.7 15.4 10.6 15.4 H3.4 Q2.3 15.4 2.2 14.4Z"/></g></svg></span></span><span class="asep" style="left:103.9px"></span><span class="asep" style="left:136.5px"></span></span></span></div>
</div>
<div class="tr st" style="top:1362.52px">
<div class="c1"><span class="tx">22</span></div>
<div class="c2"><span class="tx"><a class="lnk">Сертификация</a><span class="fold"><svg width="20" height="16" viewBox="0 0 20 16"><path d="M0 1.6 Q0 0 1.6 0 H6.6 L9 2.2 H14.8 Q16.4 2.2 16.6 4 V5.4 H4.6 Q3.4 5.4 2.8 6.4 L0 11Z" fill="#111"/><path d="M4.4 6.8 H19 Q20.2 6.9 19.7 8 L16.4 15 Q15.9 16 14.8 16 H1.2 Q0 15.9 0.5 14.8Z" fill="#111"/></svg></span></span></div>
<div class="c3"><svg class="ilink" width="18" height="14" viewBox="0 0 18 14"><g fill="none" stroke="#111" stroke-width="1.75" stroke-linecap="round"><path d="M6.17 11.35 L5.57 11.87 A3 3 0 0 1 1.63 7.33 L6.23 3.33 A3 3 0 0 1 10.17 7.87 L9.6 8.4"/><path d="M12.43 2.13 A3 3 0 0 1 16.37 6.67 L11.77 10.67 A3 3 0 0 1 7.83 6.13 L8.43 5.6"/></g></svg><span class="tx url">/certification</span></div>
<div class="c4"><span class="badge pr">Простая</span></div>
<div class="c5"><span class="c5in"><svg class="iwarn" width="18" height="16" viewBox="0 0 18 16"><path d="M9 0.3 Q9.7 0.3 10.1 1 L17.7 14.4 Q18.1 15.8 16.8 15.9 L1.2 15.9 Q-0.1 15.8 0.3 14.4 L7.9 1 Q8.3 0.3 9 0.3Z" fill="#f9a50f"/><rect x="8.2" y="4.8" width="1.6" height="7.2" rx=".7" fill="#fff"/><circle cx="9" cy="13.5" r="0.95" fill="#fff"/></svg><span class="agrp" style="width:169.6px"><span class="agbg" style="width:169.6px"></span><span class="ab w fl" style="left:0px;width:32.7px"><span class="ic"><svg width="14" height="14" viewBox="0 0 14 14"><g stroke="#6c757d" stroke-width="1.55" stroke-linecap="round"><path d="M1.6 0.9 H8.6"/><path d="M1.6 4.8 H13.4"/><path d="M1.6 8.6 H8.6"/><path d="M1.6 12.6 H13.4"/></g></svg></span></span><span class="ab g" style="left:32.7px;width:37.099999999999994px"><span class="ic"><svg width="18" height="14" viewBox="0 0 18 14"><path d="M9 0.9 C5 0.9 2 3.7 0.9 7 C2 10.3 5 13.1 9 13.1 C13 13.1 16 10.3 17.1 7 C16 3.7 13 0.9 9 0.9Z" fill="none" stroke="#d4f7e0" stroke-width="1.55"/><circle cx="9" cy="7" r="3.1" fill="none" stroke="#d4f7e0" stroke-width="1.65"/><path d="M9.9 8.6 A1.8 1.8 0 0 0 10.6 6.4" fill="none" stroke="#d4f7e0" stroke-width="0.9"/></svg></span></span><span class="ab w" style="left:69.8px;width:34.60000000000001px"><span class="ic"><svg width="16" height="16" viewBox="0 0 16 16"><path d="M0.8 15.2 L1.7 11.2 L11.8 1.1 Q13.2 -0.3 14.6 1.1 L14.9 1.4 Q16.3 2.8 14.9 4.2 L4.8 14.3 Z" fill="none" stroke="#6c757d" stroke-width="1.35" stroke-linejoin="round"/><path d="M10.6 2.3 L11.8 1.1 Q13.2 -0.3 14.6 1.1 L14.9 1.4 Q16.3 2.8 14.9 4.2 L13.7 5.4Z" fill="#6c757d"/><path d="M3.3 12.7 L11.5 4.5" stroke="#6c757d" stroke-width="1.2"/><path d="M0.8 15.2 L1.2 13.4 L2.6 14.8Z" fill="#6c757d"/></svg></span></span><span class="ab w" style="left:104.4px;width:32.599999999999994px"><span class="ic"><svg width="14" height="16" viewBox="0 0 14 16"><g fill="none" stroke="#6c757d"><path d="M0.6 3.2 H13.4" stroke-width="1.5" stroke-linecap="round"/><path d="M4.6 3 V2.1 Q4.6 1 5.7 1 H8.3 Q9.4 1 9.4 2.1 V3" stroke-width="1.4"/><path d="M2 3.6 L2.6 14 Q2.7 15.2 3.9 15.2 H10.1 Q11.3 15.2 11.4 14 L12 3.6" stroke-width="1.4"/><path d="M4.8 6 V12.6 M7 6 V12.6 M9.2 6 V12.6" stroke-width="1"/></g></svg></span></span><span class="ab w ll" style="left:137.0px;width:32.599999999999994px"><span class="ic"><svg width="14" height="16" viewBox="0 0 14 16"><g fill="#6c757d"><rect x="0.2" y="2.2" width="13.6" height="1.9" rx=".7"/><path d="M4.4 2.4 L5 0.7 H9 L9.6 2.4Z"/><path d="M1.3 4.6 H12.7 L11.8 14.4 Q11.7 15.4 10.6 15.4 H3.4 Q2.3 15.4 2.2 14.4Z"/></g></svg></span></span><span class="asep" style="left:103.9px"></span><span class="asep" style="left:136.5px"></span></span></span></div>
</div>
<div class="tr" style="top:1416.16px">
<div class="c1"><span class="tx">18</span></div>
<div class="c2"><span class="tx"><a class="lnk">Что такое Общероссийская Профессиональная Психотерапевтическая Лига</a><span class="fold"><svg width="20" height="16" viewBox="0 0 20 16"><path d="M0 1.6 Q0 0 1.6 0 H6.6 L9 2.2 H14.8 Q16.4 2.2 16.6 4 V5.4 H4.6 Q3.4 5.4 2.8 6.4 L0 11Z" fill="#111"/><path d="M4.4 6.8 H19 Q20.2 6.9 19.7 8 L16.4 15 Q15.9 16 14.8 16 H1.2 Q0 15.9 0.5 14.8Z" fill="#111"/></svg></span></span></div>
<div class="c3"><svg class="ilink" width="18" height="14" viewBox="0 0 18 14"><g fill="none" stroke="#111" stroke-width="1.75" stroke-linecap="round"><path d="M6.17 11.35 L5.57 11.87 A3 3 0 0 1 1.63 7.33 L6.23 3.33 A3 3 0 0 1 10.17 7.87 L9.6 8.4"/><path d="M12.43 2.13 A3 3 0 0 1 16.37 6.67 L11.77 10.67 A3 3 0 0 1 7.83 6.13 L8.43 5.6"/></g></svg><span class="tx url">/about</span></div>
<div class="c4"><span class="badge pr">Простая</span></div>
<div class="c5"><span class="c5in"><svg class="iwarn" width="18" height="16" viewBox="0 0 18 16"><path d="M9 0.3 Q9.7 0.3 10.1 1 L17.7 14.4 Q18.1 15.8 16.8 15.9 L1.2 15.9 Q-0.1 15.8 0.3 14.4 L7.9 1 Q8.3 0.3 9 0.3Z" fill="#f9a50f"/><rect x="8.2" y="4.8" width="1.6" height="7.2" rx=".7" fill="#fff"/><circle cx="9" cy="13.5" r="0.95" fill="#fff"/></svg><span class="agrp" style="width:169.6px"><span class="agbg" style="width:169.6px"></span><span class="ab w fl" style="left:0px;width:32.7px"><span class="ic"><svg width="14" height="14" viewBox="0 0 14 14"><g stroke="#6c757d" stroke-width="1.55" stroke-linecap="round"><path d="M1.6 0.9 H8.6"/><path d="M1.6 4.8 H13.4"/><path d="M1.6 8.6 H8.6"/><path d="M1.6 12.6 H13.4"/></g></svg></span></span><span class="ab g" style="left:32.7px;width:37.099999999999994px"><span class="ic"><svg width="18" height="14" viewBox="0 0 18 14"><path d="M9 0.9 C5 0.9 2 3.7 0.9 7 C2 10.3 5 13.1 9 13.1 C13 13.1 16 10.3 17.1 7 C16 3.7 13 0.9 9 0.9Z" fill="none" stroke="#d4f7e0" stroke-width="1.55"/><circle cx="9" cy="7" r="3.1" fill="none" stroke="#d4f7e0" stroke-width="1.65"/><path d="M9.9 8.6 A1.8 1.8 0 0 0 10.6 6.4" fill="none" stroke="#d4f7e0" stroke-width="0.9"/></svg></span></span><span class="ab w" style="left:69.8px;width:34.60000000000001px"><span class="ic"><svg width="16" height="16" viewBox="0 0 16 16"><path d="M0.8 15.2 L1.7 11.2 L11.8 1.1 Q13.2 -0.3 14.6 1.1 L14.9 1.4 Q16.3 2.8 14.9 4.2 L4.8 14.3 Z" fill="none" stroke="#6c757d" stroke-width="1.35" stroke-linejoin="round"/><path d="M10.6 2.3 L11.8 1.1 Q13.2 -0.3 14.6 1.1 L14.9 1.4 Q16.3 2.8 14.9 4.2 L13.7 5.4Z" fill="#6c757d"/><path d="M3.3 12.7 L11.5 4.5" stroke="#6c757d" stroke-width="1.2"/><path d="M0.8 15.2 L1.2 13.4 L2.6 14.8Z" fill="#6c757d"/></svg></span></span><span class="ab w" style="left:104.4px;width:32.599999999999994px"><span class="ic"><svg width="14" height="16" viewBox="0 0 14 16"><g fill="none" stroke="#6c757d"><path d="M0.6 3.2 H13.4" stroke-width="1.5" stroke-linecap="round"/><path d="M4.6 3 V2.1 Q4.6 1 5.7 1 H8.3 Q9.4 1 9.4 2.1 V3" stroke-width="1.4"/><path d="M2 3.6 L2.6 14 Q2.7 15.2 3.9 15.2 H10.1 Q11.3 15.2 11.4 14 L12 3.6" stroke-width="1.4"/><path d="M4.8 6 V12.6 M7 6 V12.6 M9.2 6 V12.6" stroke-width="1"/></g></svg></span></span><span class="ab w ll" style="left:137.0px;width:32.599999999999994px"><span class="ic"><svg width="14" height="16" viewBox="0 0 14 16"><g fill="#6c757d"><rect x="0.2" y="2.2" width="13.6" height="1.9" rx=".7"/><path d="M4.4 2.4 L5 0.7 H9 L9.6 2.4Z"/><path d="M1.3 4.6 H12.7 L11.8 14.4 Q11.7 15.4 10.6 15.4 H3.4 Q2.3 15.4 2.2 14.4Z"/></g></svg></span></span><span class="asep" style="left:103.9px"></span><span class="asep" style="left:136.5px"></span></span></span></div>
</div>


<!-- pagination -->
<div class="abs" style="left:1812.5px;top:1476.2px;width:151px;height:41.5px;border:1px solid #e6e8ea;border-radius:7px;background:#fff"></div>
<div class="abs" style="left:1850.3px;top:1476.2px;width:37px;height:41.5px;background:#198754"></div>
<div class="abs" style="left:1925px;top:1477px;width:1px;height:40px;background:#e6e8ea"></div>
<div class="abs tx" style="left:1826px;top:1486px;font-size:16px;line-height:22px;color:#2e6b4f">«</div>
<div class="abs tx" style="left:1863px;top:1485px;font-size:20px;line-height:22px;color:#fff">1</div>
<div class="abs tx" style="left:1900px;top:1485px;font-size:20px;line-height:22px;color:#198754">2</div>
<div class="abs tx" style="left:1939px;top:1486px;font-size:16px;line-height:22px;color:#198754">»</div>
</body></html>
